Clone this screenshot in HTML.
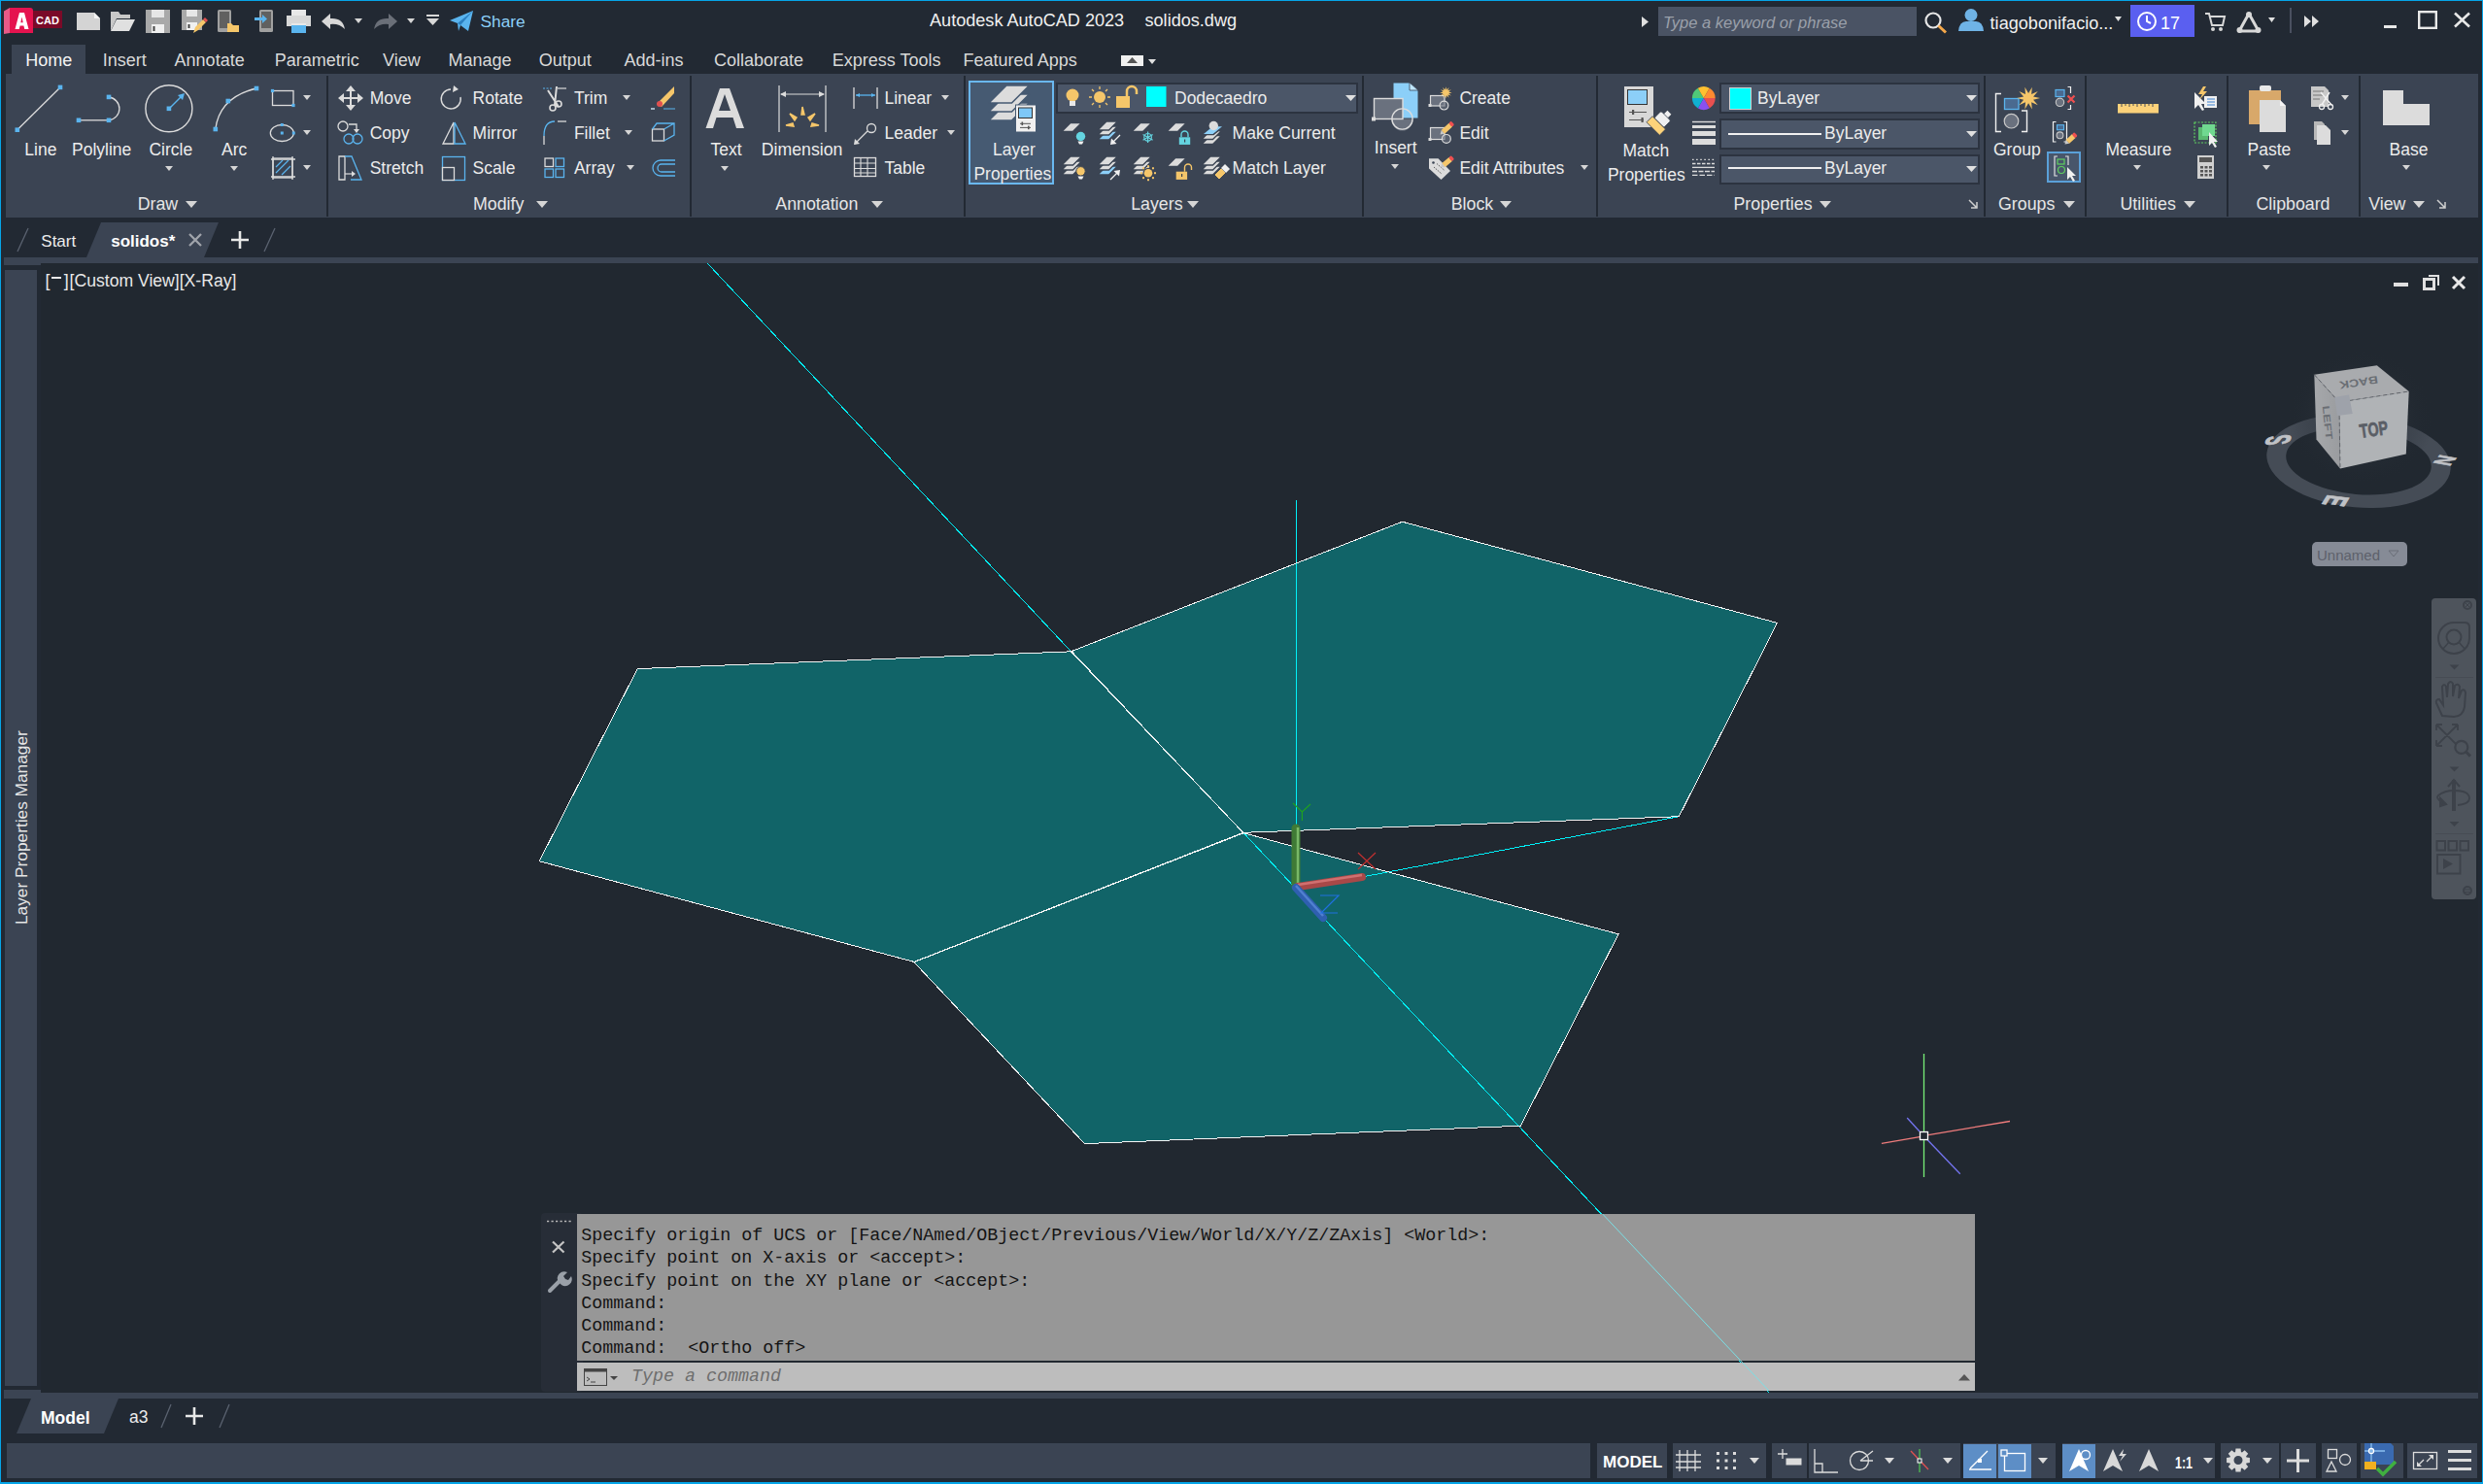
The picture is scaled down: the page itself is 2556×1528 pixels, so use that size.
<!DOCTYPE html><html><head><meta charset="utf-8"><style>
html,body{margin:0;padding:0;width:2556px;height:1528px;overflow:hidden;background:#222933;font-family:"Liberation Sans", sans-serif;}
div,svg{box-sizing:border-box}
</style></head><body>
<div style="position:absolute;left:0px;top:0px;width:2556px;height:1528px;background:#222933;"></div>
<div style="position:absolute;left:6px;top:76px;width:2545px;height:148px;background:#3b4453;"></div>
<div style="position:absolute;left:12px;top:46px;width:76px;height:30px;background:#3b4453;"></div>
<div style="position:absolute;left:4px;top:265px;width:2547px;height:6px;background:#3b4453;"></div>
<div style="position:absolute;left:4px;top:271px;width:38px;height:2px;background:#3b4453;"></div>
<div style="position:absolute;left:42px;top:271px;width:2509px;height:1163px;background:#212830;"></div>
<div style="position:absolute;left:5px;top:278px;width:33px;height:1149px;background:#3b4453;"></div>
<div style="position:absolute;left:4px;top:1431px;width:38px;height:3px;background:#3b4453;"></div>
<div style="position:absolute;left:4px;top:1434px;width:2547px;height:6px;background:#3b4453;"></div>
<div style="position:absolute;left:7px;top:1486px;width:1630px;height:36px;background:#3b4453;"></div>
<svg style="position:absolute;left:3px;top:7px;overflow:visible;" width="62" height="28" viewBox="0 0 62 28"><path d="M1,4.5 L7,1 L7,27 L1,28 Z" fill="#e85a87"/><path d="M7,1 L28,1 Q31,1 31,4 L31,27 L7,27 Z" fill="#e5134f"/><rect x="31" y="4" width="30" height="18" fill="#7a0a28"/><path d="M12.5,23 L17,6 L22,6 L26.5,23 L22.3,23 L21.4,19.5 L17.6,19.5 L16.7,23 Z M18.3,16.2 L20.7,16.2 L19.5,10.5 Z" fill="#fff"/><text x="46" y="17.5" font-family="Liberation Sans" font-weight="bold" font-size="11" fill="#fff" text-anchor="middle">CAD</text></svg>
<svg style="position:absolute;left:79px;top:13px;overflow:visible;" width="24" height="18" viewBox="0 0 24 18"><path d="M0,0 L18,0 L24,6 L24,18 L0,18 Z" fill="#d4d4d4"/><path d="M18,0 L18,6 L24,6 Z" fill="#f4f4f4"/></svg>
<svg style="position:absolute;left:114px;top:11px;overflow:visible;" width="25" height="21" viewBox="0 0 25 21"><path d="M0,1 L8,1 L10,4 L20,4 L20,8 L6,8 L0,21 Z" fill="#c8c8c8"/><path d="M6,9 L25,9 L19,21 L0,21 Z" fill="#e0e0e0"/></svg>
<svg style="position:absolute;left:150px;top:10px;overflow:visible;" width="25" height="24" viewBox="0 0 25 24"><path d="M0,0 L25,0 L25,24 L0,24 Z" fill="#a9a9a9"/><rect x="6" y="0" width="13" height="8" fill="#e6e6e6"/><rect x="6" y="15" width="13" height="9" fill="#f0f0f0"/><rect x="7.5" y="17" width="2" height="5" fill="#444"/></svg>
<svg style="position:absolute;left:187px;top:10px;overflow:visible;" width="25" height="24" viewBox="0 0 25 24"><path d="M0,0 L21,0 L21,21 L0,21 Z" fill="#a9a9a9"/><rect x="5" y="0" width="11" height="7" fill="#e6e6e6"/><rect x="5" y="13" width="11" height="8" fill="#f0f0f0"/><rect x="6.5" y="15" width="2" height="4" fill="#444"/><path d="M12,24 L14,18 L22,10 L25,13 L17,21 Z" fill="#f5c66a"/><path d="M22,10 L24,8 L27,11 L25,13Z" fill="#e05050"/></svg>
<svg style="position:absolute;left:224px;top:10px;overflow:visible;" width="23" height="24" viewBox="0 0 23 24"><rect x="0" y="0" width="14" height="23" rx="1.5" fill="#a0a0a0"/><rect x="2" y="2" width="10" height="17" fill="#606060"/><path d="M10,14 L14,14 L16,16 L22,16 L22,23 L10,23 Z" fill="#f5c66a"/></svg>
<svg style="position:absolute;left:262px;top:10px;overflow:visible;" width="19" height="24" viewBox="0 0 19 24"><rect x="5" y="0" width="14" height="23" rx="1.5" fill="#a0a0a0"/><rect x="7" y="2" width="10" height="17" fill="#606060"/><path d="M0,8 L8,8 L8,5 L13,9.5 L8,14 L8,11 L0,11 Z" fill="#5ab4ee"/></svg>
<svg style="position:absolute;left:295px;top:10px;overflow:visible;" width="25" height="24" viewBox="0 0 25 24"><rect x="5" y="0" width="15" height="6" fill="#e8e8e8"/><rect x="0" y="6" width="25" height="11" fill="#d8d8d8"/><rect x="5" y="14" width="15" height="10" fill="#5ab4ee"/><rect x="5" y="14" width="15" height="2" fill="#e8e8e8"/></svg>
<svg style="position:absolute;left:331px;top:14px;overflow:visible;" width="25" height="16" viewBox="0 0 25 16"><path d="M0,8 L9,0 L9,5 Q22,4 24,16 Q18,10 9,11 L9,16 Z" fill="#d8d8d8"/></svg>
<svg style="position:absolute;left:365.0px;top:19.0px;overflow:visible;" width="8" height="5" viewBox="0 0 8 5"><path d="M0,0 L8,0 L4.0,5 Z" fill="#d6d6d6"/></svg>
<svg style="position:absolute;left:385px;top:14px;overflow:visible;" width="24" height="16" viewBox="0 0 24 16"><path d="M24,8 L15,0 L15,5 Q2,4 0,16 Q6,10 15,11 L15,16 Z" fill="#6a6f78"/></svg>
<svg style="position:absolute;left:418.6px;top:19.0px;overflow:visible;" width="8" height="5" viewBox="0 0 8 5"><path d="M0,0 L8,0 L4.0,5 Z" fill="#d6d6d6"/></svg>
<svg style="position:absolute;left:439px;top:15px;overflow:visible;" width="13" height="11" viewBox="0 0 13 11"><rect x="0" y="0" width="13" height="2" fill="#d8d8d8"/><path d="M0,4 L13,4 L6.5,11 Z" fill="#d8d8d8"/></svg>
<svg style="position:absolute;left:463px;top:11px;overflow:visible;" width="24" height="21" viewBox="0 0 24 21"><path d="M0,10 L24,0 L19,21 L11,15 L9,21 L8,13 Z" fill="#5ab4ee"/><path d="M8,13 L24,0 L11,15 Z" fill="#2a7fc0"/></svg>
<div style="position:absolute;left:494.5px;top:14.36px;font-size:17.3px;line-height:17.3px;color:#8ccff8;font-family:'Liberation Sans', sans-serif;white-space:pre;">Share</div>
<div style="position:absolute;left:957px;top:11.68px;font-size:18.1px;line-height:18.1px;color:#f0f0f0;font-family:'Liberation Sans', sans-serif;white-space:pre;">Autodesk AutoCAD 2023</div>
<div style="position:absolute;left:1178.5px;top:11.68px;font-size:18.1px;line-height:18.1px;color:#f0f0f0;font-family:'Liberation Sans', sans-serif;white-space:pre;">solidos.dwg</div>
<svg style="position:absolute;left:1690px;top:17px;overflow:visible;" width="7" height="11" viewBox="0 0 7 11"><path d="M0,0 L7,5.5 L0,11 Z" fill="#e0e0e0"/></svg>
<div style="position:absolute;left:1707px;top:7px;width:266px;height:30px;background:#4a5364;"></div>
<div style="position:absolute;left:1712px;top:15.03px;font-size:16.5px;line-height:16.5px;color:#9aa0aa;font-family:'Liberation Sans', sans-serif;white-space:pre;font-style:italic;">Type a keyword or phrase</div>
<svg style="position:absolute;left:1981px;top:12px;overflow:visible;" width="24" height="22" viewBox="0 0 24 22"><circle cx="9" cy="9" r="7.5" fill="none" stroke="#e6e6e6" stroke-width="2.2"/><path d="M14.5,14.5 L22,21.5" stroke="#f5a84a" stroke-width="3"/></svg>
<svg style="position:absolute;left:2016px;top:9px;overflow:visible;" width="26" height="23" viewBox="0 0 26 23"><circle cx="13" cy="6.5" r="6.5" fill="#6fb3e6"/><path d="M0,23 Q1,13 8,13 L18,13 Q25,13 26,23 Z" fill="#6fb3e6"/></svg>
<div style="position:absolute;left:2048.6px;top:14.68px;font-size:18.1px;line-height:18.1px;color:#f0f0f0;font-family:'Liberation Sans', sans-serif;white-space:pre;">tiagobonifacio...</div>
<svg style="position:absolute;left:2177.0px;top:16.5px;overflow:visible;" width="7" height="5" viewBox="0 0 7 5"><path d="M0,0 L7,0 L3.5,5 Z" fill="#e0e0e0"/></svg>
<div style="position:absolute;left:2193px;top:5px;width:66px;height:33px;background:#5a5ff0;"></div>
<svg style="position:absolute;left:2199px;top:11px;overflow:visible;" width="22" height="22" viewBox="0 0 22 22"><circle cx="11" cy="11" r="9" fill="none" stroke="#fff" stroke-width="2"/><path d="M11,5 L11,11 L15,13" fill="none" stroke="#fff" stroke-width="2"/></svg>
<div style="position:absolute;left:2224px;top:14.76px;font-size:18px;line-height:18px;color:#ffffff;font-family:'Liberation Sans', sans-serif;white-space:pre;">17</div>
<svg style="position:absolute;left:2270px;top:13px;overflow:visible;" width="20" height="20" viewBox="0 0 20 20"><path d="M0,1 L4,1 L7,13 L18,13 L20,4 L5,4" fill="none" stroke="#d8d8d8" stroke-width="2"/><circle cx="8" cy="17" r="2" fill="#d8d8d8"/><circle cx="16" cy="17" r="2" fill="#d8d8d8"/></svg>
<svg style="position:absolute;left:2303px;top:12px;overflow:visible;" width="24" height="22" viewBox="0 0 24 22"><path d="M12,2 L22,20 L2,20 Z" fill="none" stroke="#d8d8d8" stroke-width="3" stroke-linejoin="round"/><circle cx="12" cy="3" r="3" fill="#d8d8d8"/><circle cx="2.5" cy="19" r="3" fill="#d8d8d8"/><circle cx="21.5" cy="19" r="3" fill="#d8d8d8"/></svg>
<svg style="position:absolute;left:2334.5px;top:17.5px;overflow:visible;" width="7" height="5" viewBox="0 0 7 5"><path d="M0,0 L7,0 L3.5,5 Z" fill="#e0e0e0"/></svg>
<div style="position:absolute;left:2357px;top:8px;width:2px;height:26px;background:#4a5060;"></div>
<svg style="position:absolute;left:2372px;top:16px;overflow:visible;" width="15" height="12" viewBox="0 0 15 12"><path d="M0,0 L7,6 L0,12 Z M8,0 L15,6 L8,12 Z" fill="#e0e0e0"/></svg>
<div style="position:absolute;left:2454px;top:26px;width:13px;height:3px;background:#e8e8e8;"></div>
<svg style="position:absolute;left:2489px;top:11px;overflow:visible;" width="20" height="19" viewBox="0 0 20 19"><rect x="1.2" y="1.2" width="17.6" height="16.6" fill="none" stroke="#e8e8e8" stroke-width="2.4"/></svg>
<svg style="position:absolute;left:2526px;top:13px;overflow:visible;" width="17" height="15" viewBox="0 0 17 15"><path d="M1,0.5 L16,14.5 M16,0.5 L1,14.5" stroke="#e8e8e8" stroke-width="2.6"/></svg>
<div style="position:absolute;left:26.2px;top:52.96px;font-size:18px;line-height:18px;color:#f4f4f4;font-family:'Liberation Sans', sans-serif;white-space:pre;">Home</div>
<div style="position:absolute;left:105.7px;top:52.96px;font-size:18px;line-height:18px;color:#d9d9d9;font-family:'Liberation Sans', sans-serif;white-space:pre;">Insert</div>
<div style="position:absolute;left:179.6px;top:52.96px;font-size:18px;line-height:18px;color:#d9d9d9;font-family:'Liberation Sans', sans-serif;white-space:pre;">Annotate</div>
<div style="position:absolute;left:282.8px;top:52.96px;font-size:18px;line-height:18px;color:#d9d9d9;font-family:'Liberation Sans', sans-serif;white-space:pre;">Parametric</div>
<div style="position:absolute;left:394.1px;top:52.96px;font-size:18px;line-height:18px;color:#d9d9d9;font-family:'Liberation Sans', sans-serif;white-space:pre;">View</div>
<div style="position:absolute;left:461.5px;top:52.96px;font-size:18px;line-height:18px;color:#d9d9d9;font-family:'Liberation Sans', sans-serif;white-space:pre;">Manage</div>
<div style="position:absolute;left:554.8px;top:52.96px;font-size:18px;line-height:18px;color:#d9d9d9;font-family:'Liberation Sans', sans-serif;white-space:pre;">Output</div>
<div style="position:absolute;left:642.5px;top:52.96px;font-size:18px;line-height:18px;color:#d9d9d9;font-family:'Liberation Sans', sans-serif;white-space:pre;">Add-ins</div>
<div style="position:absolute;left:735px;top:52.96px;font-size:18px;line-height:18px;color:#d9d9d9;font-family:'Liberation Sans', sans-serif;white-space:pre;">Collaborate</div>
<div style="position:absolute;left:856.8px;top:52.96px;font-size:18px;line-height:18px;color:#d9d9d9;font-family:'Liberation Sans', sans-serif;white-space:pre;">Express Tools</div>
<div style="position:absolute;left:991.6px;top:52.96px;font-size:18px;line-height:18px;color:#d9d9d9;font-family:'Liberation Sans', sans-serif;white-space:pre;">Featured Apps</div>
<div style="position:absolute;left:1154px;top:57px;width:23px;height:11px;background:#f0f0f0;"></div>
<svg style="position:absolute;left:1160px;top:59px;overflow:visible;" width="11" height="6" viewBox="0 0 11 6"><path d="M0,6 L5.5,0 L11,6 Z" fill="#555"/></svg>
<svg style="position:absolute;left:1182.0px;top:61.0px;overflow:visible;" width="8" height="5" viewBox="0 0 8 5"><path d="M0,0 L8,0 L4.0,5 Z" fill="#e0e0e0"/></svg>
<div style="position:absolute;left:335.5px;top:78px;width:2.0px;height:145px;background:#222933;"></div>
<div style="position:absolute;left:710px;top:78px;width:2px;height:145px;background:#222933;"></div>
<div style="position:absolute;left:992px;top:78px;width:2px;height:145px;background:#222933;"></div>
<div style="position:absolute;left:1401.6px;top:78px;width:2.0px;height:145px;background:#222933;"></div>
<div style="position:absolute;left:1643.4px;top:78px;width:2.0px;height:145px;background:#222933;"></div>
<div style="position:absolute;left:2041.7px;top:78px;width:2.0px;height:145px;background:#222933;"></div>
<div style="position:absolute;left:2146.1px;top:78px;width:2.0px;height:145px;background:#222933;"></div>
<div style="position:absolute;left:2291.9px;top:78px;width:2.0px;height:145px;background:#222933;"></div>
<div style="position:absolute;left:2427.8px;top:78px;width:2.0px;height:145px;background:#222933;"></div>
<div style="position:absolute;left:141.7px;top:202.43px;font-size:17.8px;line-height:17.8px;color:#e6e6e6;font-family:'Liberation Sans', sans-serif;white-space:pre;">Draw</div>
<svg style="position:absolute;left:191.0px;top:206.5px;overflow:visible;" width="12" height="7" viewBox="0 0 12 7"><path d="M0,0 L12,0 L6.0,7 Z" fill="#d6d6d6"/></svg>
<div style="position:absolute;left:487px;top:202.43px;font-size:17.8px;line-height:17.8px;color:#e6e6e6;font-family:'Liberation Sans', sans-serif;white-space:pre;">Modify</div>
<svg style="position:absolute;left:552.0px;top:206.5px;overflow:visible;" width="12" height="7" viewBox="0 0 12 7"><path d="M0,0 L12,0 L6.0,7 Z" fill="#d6d6d6"/></svg>
<div style="position:absolute;left:798.3px;top:202.43px;font-size:17.8px;line-height:17.8px;color:#e6e6e6;font-family:'Liberation Sans', sans-serif;white-space:pre;">Annotation</div>
<svg style="position:absolute;left:897.0px;top:206.5px;overflow:visible;" width="12" height="7" viewBox="0 0 12 7"><path d="M0,0 L12,0 L6.0,7 Z" fill="#d6d6d6"/></svg>
<div style="position:absolute;left:1164.2px;top:202.43px;font-size:17.8px;line-height:17.8px;color:#e6e6e6;font-family:'Liberation Sans', sans-serif;white-space:pre;">Layers</div>
<svg style="position:absolute;left:1222.0px;top:206.5px;overflow:visible;" width="12" height="7" viewBox="0 0 12 7"><path d="M0,0 L12,0 L6.0,7 Z" fill="#d6d6d6"/></svg>
<div style="position:absolute;left:1493.7px;top:202.43px;font-size:17.8px;line-height:17.8px;color:#e6e6e6;font-family:'Liberation Sans', sans-serif;white-space:pre;">Block</div>
<svg style="position:absolute;left:1544.4px;top:206.5px;overflow:visible;" width="12" height="7" viewBox="0 0 12 7"><path d="M0,0 L12,0 L6.0,7 Z" fill="#d6d6d6"/></svg>
<div style="position:absolute;left:1784.5px;top:202.43px;font-size:17.8px;line-height:17.8px;color:#e6e6e6;font-family:'Liberation Sans', sans-serif;white-space:pre;">Properties</div>
<svg style="position:absolute;left:1873.0px;top:206.5px;overflow:visible;" width="12" height="7" viewBox="0 0 12 7"><path d="M0,0 L12,0 L6.0,7 Z" fill="#d6d6d6"/></svg>
<div style="position:absolute;left:2057px;top:202.43px;font-size:17.8px;line-height:17.8px;color:#e6e6e6;font-family:'Liberation Sans', sans-serif;white-space:pre;">Groups</div>
<svg style="position:absolute;left:2124.3px;top:206.5px;overflow:visible;" width="12" height="7" viewBox="0 0 12 7"><path d="M0,0 L12,0 L6.0,7 Z" fill="#d6d6d6"/></svg>
<div style="position:absolute;left:2182.5px;top:202.43px;font-size:17.8px;line-height:17.8px;color:#e6e6e6;font-family:'Liberation Sans', sans-serif;white-space:pre;">Utilities</div>
<svg style="position:absolute;left:2248.0px;top:206.5px;overflow:visible;" width="12" height="7" viewBox="0 0 12 7"><path d="M0,0 L12,0 L6.0,7 Z" fill="#d6d6d6"/></svg>
<div style="position:absolute;left:2322.4px;top:202.43px;font-size:17.8px;line-height:17.8px;color:#e6e6e6;font-family:'Liberation Sans', sans-serif;white-space:pre;">Clipboard</div>
<div style="position:absolute;left:2438.2px;top:202.43px;font-size:17.8px;line-height:17.8px;color:#e6e6e6;font-family:'Liberation Sans', sans-serif;white-space:pre;">View</div>
<svg style="position:absolute;left:2483.7px;top:206.5px;overflow:visible;" width="12" height="7" viewBox="0 0 12 7"><path d="M0,0 L12,0 L6.0,7 Z" fill="#d6d6d6"/></svg>
<svg style="position:absolute;left:2026px;top:205px;overflow:visible;" width="10" height="10" viewBox="0 0 10 10"><path d="M1,1 L9,9 M9,3 L9,9 L3,9" fill="none" stroke="#d0d0d0" stroke-width="1.5"/></svg>
<svg style="position:absolute;left:2507.8px;top:205px;overflow:visible;" width="10" height="10" viewBox="0 0 10 10"><path d="M1,1 L9,9 M9,3 L9,9 L3,9" fill="none" stroke="#d0d0d0" stroke-width="1.5"/></svg>
<svg style="position:absolute;left:0px;top:0px;overflow:visible;" width="340" height="224" viewBox="0 0 340 224"><line x1="18.5" y1="133" x2="61.5" y2="90.5" stroke="#dcdcdc" stroke-width="1.3"/><rect x="15.5" y="131.39999999999998" width="4.6" height="4.6" fill="#5ab4ee"/><rect x="59.7" y="87.60000000000001" width="4.6" height="4.6" fill="#5ab4ee"/><line x1="81" y1="123.8" x2="112" y2="123.8" stroke="#dcdcdc" stroke-width="1.3"/><path d="M112,100 A12.5,12 0 0 1 112,123.8" fill="none" stroke="#dcdcdc" stroke-width="1.3"/><rect x="78.7" y="121.5" width="4.6" height="4.6" fill="#5ab4ee"/><rect x="109.7" y="121.5" width="4.6" height="4.6" fill="#5ab4ee"/><rect x="109.7" y="97.60000000000001" width="4.6" height="4.6" fill="#5ab4ee"/><circle cx="173.9" cy="111.8" r="24" fill="none" stroke="#dcdcdc" stroke-width="1.4"/><line x1="174" y1="112" x2="187" y2="99" stroke="#5ab4ee" stroke-width="1.5"/><path d="M190,96 L183,98 L188,103 Z" fill="#5ab4ee"/><rect x="171.6" y="109.5" width="4.6" height="4.6" fill="#5ab4ee"/><path d="M221.8,133 Q226,100 264,91" fill="none" stroke="#dcdcdc" stroke-width="1.3"/><rect x="219.5" y="130.7" width="4.6" height="4.6" fill="#5ab4ee"/><rect x="232.5" y="101.7" width="4.6" height="4.6" fill="#5ab4ee"/><rect x="261.7" y="88.7" width="4.6" height="4.6" fill="#5ab4ee"/><rect x="280.5" y="93.5" width="21.5" height="15" fill="none" stroke="#dcdcdc" stroke-width="1.3"/><rect x="278.9" y="91.9" width="3.2" height="3.2" fill="#5ab4ee"/><rect x="300.4" y="106.9" width="3.2" height="3.2" fill="#5ab4ee"/><ellipse cx="290.3" cy="137" rx="12" ry="8.5" fill="none" stroke="#dcdcdc" stroke-width="1.3"/><rect x="288.8" y="135.5" width="3" height="3" fill="#5ab4ee"/><rect x="288.8" y="127.0" width="3" height="3" fill="#5ab4ee"/><rect x="300.8" y="135.5" width="3" height="3" fill="#5ab4ee"/><rect x="281" y="163" width="20" height="20" fill="none" stroke="#dcdcdc" stroke-width="1.3"/><path d="M279,164 L304,164 M279,182 L304,182 M281,161 L281,185 M301,161 L301,185" stroke="#dcdcdc" stroke-width="1.3"/><path d="M284,178 L297,165 M284,172 L291,165 M290,180 L299,171" stroke="#5ab4ee" stroke-width="1.2"/></svg>
<div style="position:absolute;left:25.3px;top:145.79px;font-size:17.5px;line-height:17.5px;color:#ececec;font-family:'Liberation Sans', sans-serif;white-space:pre;">Line</div>
<div style="position:absolute;left:74px;top:145.79px;font-size:17.5px;line-height:17.5px;color:#ececec;font-family:'Liberation Sans', sans-serif;white-space:pre;">Polyline</div>
<div style="position:absolute;left:153.4px;top:145.79px;font-size:17.5px;line-height:17.5px;color:#ececec;font-family:'Liberation Sans', sans-serif;white-space:pre;">Circle</div>
<div style="position:absolute;left:228px;top:145.79px;font-size:17.5px;line-height:17.5px;color:#ececec;font-family:'Liberation Sans', sans-serif;white-space:pre;">Arc</div>
<svg style="position:absolute;left:169.9px;top:170.5px;overflow:visible;" width="8" height="5" viewBox="0 0 8 5"><path d="M0,0 L8,0 L4.0,5 Z" fill="#d6d6d6"/></svg>
<svg style="position:absolute;left:236.8px;top:170.5px;overflow:visible;" width="8" height="5" viewBox="0 0 8 5"><path d="M0,0 L8,0 L4.0,5 Z" fill="#d6d6d6"/></svg>
<svg style="position:absolute;left:312.3px;top:97.5px;overflow:visible;" width="8" height="5" viewBox="0 0 8 5"><path d="M0,0 L8,0 L4.0,5 Z" fill="#d6d6d6"/></svg>
<svg style="position:absolute;left:312.3px;top:133.5px;overflow:visible;" width="8" height="5" viewBox="0 0 8 5"><path d="M0,0 L8,0 L4.0,5 Z" fill="#d6d6d6"/></svg>
<svg style="position:absolute;left:312.3px;top:169.5px;overflow:visible;" width="8" height="5" viewBox="0 0 8 5"><path d="M0,0 L8,0 L4.0,5 Z" fill="#d6d6d6"/></svg>
<svg style="position:absolute;left:0px;top:0px;overflow:visible;" width="720" height="224" viewBox="0 0 720 224"><path d="M361,89 L361,113 M349,101 L373,101" stroke="#dcdcdc" stroke-width="2"/><path d="M361,88 L356,94 L366,94Z M361,114 L356,108 L366,108Z M348,101 L354,96 L354,106Z M374,101 L368,96 L368,106Z" fill="#dcdcdc"/><circle cx="353" cy="130" r="5" fill="none" stroke="#dcdcdc" stroke-width="1.3"/><path d="M359,128 L367,128 L367,134" fill="none" stroke="#dcdcdc" stroke-width="1.3"/><path d="M364,133 L370,133 L367,137Z" fill="#dcdcdc"/><circle cx="359" cy="143" r="5" fill="none" stroke="#5ab4ee" stroke-width="1.3"/><circle cx="368" cy="143" r="5" fill="none" stroke="#5ab4ee" stroke-width="1.3"/><path d="M349,161 L355,161 L355,185 L349,185 Z" fill="none" stroke="#dcdcdc" stroke-width="1.3"/><path d="M355,161 L362,161 L372,185 L361,185" fill="none" stroke="#5ab4ee" stroke-width="1.3"/><path d="M355,179 L364,179" stroke="#dcdcdc" stroke-width="1.2"/><path d="M366,179 L362,176 L362,182Z" fill="#dcdcdc"/><path d="M464,92 A10,10 0 1 0 474,100" fill="none" stroke="#dcdcdc" stroke-width="1.4"/><path d="M467,88 L472,92 L466,95Z" fill="#dcdcdc"/><path d="M467,126 L456,148 L467,148 Z" fill="none" stroke="#dcdcdc" stroke-width="1.3"/><path d="M468,126 L479,148 L468,148 Z" fill="none" stroke="#5ab4ee" stroke-width="1.3"/><rect x="455.5" y="161.5" width="23" height="24" fill="none" stroke="#5ab4ee" stroke-width="1.3"/><rect x="455.5" y="172.5" width="12" height="13" fill="#3b4453" stroke="#dcdcdc" stroke-width="1.3"/><path d="M559,91 L569,91" stroke="#5ab4ee" stroke-width="1.2" stroke-dasharray="2,1.5"/><path d="M574,91 L583,91" stroke="#dcdcdc" stroke-width="1.2"/><path d="M564,93 L575,110 M573,89 L571,108" stroke="#dcdcdc" stroke-width="2"/><circle cx="569" cy="111" r="3" fill="none" stroke="#dcdcdc" stroke-width="1.6"/><circle cx="575" cy="107" r="3" fill="none" stroke="#dcdcdc" stroke-width="1.6"/><path d="M560,149 L560,140" stroke="#dcdcdc" stroke-width="1.3"/><path d="M560,140 Q560,125 571,125" fill="none" stroke="#5ab4ee" stroke-width="1.3"/><path d="M574,125 L583,125" stroke="#dcdcdc" stroke-width="1.3"/><rect x="561" y="163" width="8.5" height="8.5" fill="none" stroke="#dcdcdc" stroke-width="1.3"/><rect x="572" y="163" width="8.5" height="8.5" fill="none" stroke="#5ab4ee" stroke-width="1.3"/><rect x="561" y="174" width="8.5" height="8.5" fill="none" stroke="#5ab4ee" stroke-width="1.3"/><rect x="572" y="174" width="8.5" height="8.5" fill="none" stroke="#5ab4ee" stroke-width="1.3"/><path d="M676,107 L694,89 L694,96 L681,110 Z" fill="#f5c66a"/><circle cx="679" cy="107" r="3" fill="#e05050"/><path d="M670,112 L674,112 M683,112 L695,112" stroke="#5ab4ee" stroke-width="1.2"/><path d="M670,112 L674,112" stroke="#dcdcdc" stroke-width="1.2"/><rect x="671.5" y="133" width="12" height="12" fill="none" stroke="#dcdcdc" stroke-width="1.3"/><path d="M671.5,133 L676,127 L694,127 L694,139 L683.5,145 M683.5,133 L694,127" fill="none" stroke="#5ab4ee" stroke-width="1.3"/><path d="M695,165 L680,165 A8,8 0 0 0 680,181 L695,181 M695,169 L681,169 A4,4 0 0 0 681,177 L695,177" fill="none" stroke="#5ab4ee" stroke-width="1.3"/></svg>
<div style="position:absolute;left:380.7px;top:92.89px;font-size:17.5px;line-height:17.5px;color:#ececec;font-family:'Liberation Sans', sans-serif;white-space:pre;">Move</div>
<div style="position:absolute;left:380.7px;top:129.19px;font-size:17.5px;line-height:17.5px;color:#ececec;font-family:'Liberation Sans', sans-serif;white-space:pre;">Copy</div>
<div style="position:absolute;left:380.7px;top:165.19px;font-size:17.5px;line-height:17.5px;color:#ececec;font-family:'Liberation Sans', sans-serif;white-space:pre;">Stretch</div>
<div style="position:absolute;left:486.6px;top:92.89px;font-size:17.5px;line-height:17.5px;color:#ececec;font-family:'Liberation Sans', sans-serif;white-space:pre;">Rotate</div>
<div style="position:absolute;left:486.6px;top:129.19px;font-size:17.5px;line-height:17.5px;color:#ececec;font-family:'Liberation Sans', sans-serif;white-space:pre;">Mirror</div>
<div style="position:absolute;left:486.6px;top:165.19px;font-size:17.5px;line-height:17.5px;color:#ececec;font-family:'Liberation Sans', sans-serif;white-space:pre;">Scale</div>
<div style="position:absolute;left:590.9px;top:92.89px;font-size:17.5px;line-height:17.5px;color:#ececec;font-family:'Liberation Sans', sans-serif;white-space:pre;">Trim</div>
<div style="position:absolute;left:590.9px;top:129.19px;font-size:17.5px;line-height:17.5px;color:#ececec;font-family:'Liberation Sans', sans-serif;white-space:pre;">Fillet</div>
<div style="position:absolute;left:590.9px;top:165.19px;font-size:17.5px;line-height:17.5px;color:#ececec;font-family:'Liberation Sans', sans-serif;white-space:pre;">Array</div>
<svg style="position:absolute;left:640.8px;top:97.5px;overflow:visible;" width="8" height="5" viewBox="0 0 8 5"><path d="M0,0 L8,0 L4.0,5 Z" fill="#d6d6d6"/></svg>
<svg style="position:absolute;left:643.0px;top:133.5px;overflow:visible;" width="8" height="5" viewBox="0 0 8 5"><path d="M0,0 L8,0 L4.0,5 Z" fill="#d6d6d6"/></svg>
<svg style="position:absolute;left:645.0px;top:169.5px;overflow:visible;" width="8" height="5" viewBox="0 0 8 5"><path d="M0,0 L8,0 L4.0,5 Z" fill="#d6d6d6"/></svg>
<svg style="position:absolute;left:0px;top:0px;overflow:visible;" width="1000" height="224" viewBox="0 0 1000 224"><path d="M726.5,132 L741,91 L751,91 L766,132 L758,132 L754.5,121 L737.5,121 L734,132 Z M740,114 L752,114 L746,97 Z" fill="#dcdcdc"/><path d="M802,88 L802,136 M850,88 L850,136" stroke="#dcdcdc" stroke-width="1.2"/><path d="M804,97 L848,97" stroke="#dcdcdc" stroke-width="1.2"/><path d="M803,97 L809,94 L809,100Z M849,97 L843,94 L843,100Z" fill="#dcdcdc"/><path d="M826,110 L825,118 L828,118Z M813,117 L818,124 L820,121Z M839,117 L834,124 L832,121Z M809,129 L817,130 L816,127Z M843,129 L835,130 L836,127Z" fill="#f5c66a" stroke="#f5c66a" stroke-width="1.5"/><path d="M879,90 L879,112 M903,90 L903,112" stroke="#dcdcdc" stroke-width="1.3"/><path d="M881,98 L901,98" stroke="#5ab4ee" stroke-width="1.3"/><path d="M881,98 L885,96 L885,100Z M901,98 L897,96 L897,100Z" fill="#5ab4ee"/><path d="M880,148 L893,135" stroke="#dcdcdc" stroke-width="1.3"/><path d="M879,149 L880,143 L885,148Z" fill="#dcdcdc"/><circle cx="897" cy="132" r="4.5" fill="none" stroke="#dcdcdc" stroke-width="1.3"/><rect x="879.5" y="162.5" width="22" height="19" fill="none" stroke="#dcdcdc" stroke-width="1.3"/><path d="M879.5,168 L901.5,168 M879.5,173.5 L901.5,173.5 M879.5,178 L901.5,178 M886,163 L886,181 M893,163 L893,181" stroke="#dcdcdc" stroke-width="1.1"/></svg>
<div style="position:absolute;left:731.6px;top:145.99px;font-size:17.5px;line-height:17.5px;color:#ececec;font-family:'Liberation Sans', sans-serif;white-space:pre;">Text</div>
<svg style="position:absolute;left:741.5px;top:170.5px;overflow:visible;" width="8" height="5" viewBox="0 0 8 5"><path d="M0,0 L8,0 L4.0,5 Z" fill="#d6d6d6"/></svg>
<div style="position:absolute;left:783.8px;top:145.82px;font-size:17.7px;line-height:17.7px;color:#ececec;font-family:'Liberation Sans', sans-serif;white-space:pre;">Dimension</div>
<div style="position:absolute;left:910.5px;top:92.89px;font-size:17.5px;line-height:17.5px;color:#ececec;font-family:'Liberation Sans', sans-serif;white-space:pre;">Linear</div>
<div style="position:absolute;left:910.5px;top:129.19px;font-size:17.5px;line-height:17.5px;color:#ececec;font-family:'Liberation Sans', sans-serif;white-space:pre;">Leader</div>
<div style="position:absolute;left:910.5px;top:165.19px;font-size:17.5px;line-height:17.5px;color:#ececec;font-family:'Liberation Sans', sans-serif;white-space:pre;">Table</div>
<svg style="position:absolute;left:968.8px;top:97.5px;overflow:visible;" width="8" height="5" viewBox="0 0 8 5"><path d="M0,0 L8,0 L4.0,5 Z" fill="#d6d6d6"/></svg>
<svg style="position:absolute;left:974.6px;top:133.5px;overflow:visible;" width="8" height="5" viewBox="0 0 8 5"><path d="M0,0 L8,0 L4.0,5 Z" fill="#d6d6d6"/></svg>
<div style="position:absolute;left:997px;top:83px;width:88px;height:107px;background:#465a72;border:2px solid #6ab8f0;"></div>
<svg style="position:absolute;left:0px;top:0px;overflow:visible;" width="1100" height="224" viewBox="0 0 1100 224"><path d="M1018,124 L1036,106 L1059.5,106 L1041.5,124 Z" fill="#dcdcdc" stroke="#465a72" stroke-width="1.6" stroke-linejoin="round"/><path d="M1018,115 L1036,97 L1059.5,97 L1041.5,115 Z" fill="#dcdcdc" stroke="#465a72" stroke-width="1.6" stroke-linejoin="round"/><path d="M1018,106 L1036,88 L1059.5,88 L1041.5,106 Z" fill="#dcdcdc" stroke="#465a72" stroke-width="1.6" stroke-linejoin="round"/><rect x="1045.5" y="108" width="21" height="28" fill="#f0f0f0" stroke="#465a72" stroke-width="1"/><rect x="1048.5" y="111" width="14" height="10.5" fill="#7ec8f8" stroke="#333" stroke-width="1"/><path d="M1050,127.3 L1061,127.3 M1050,131.4 L1061,131.4" stroke="#555" stroke-width="1"/><rect x="1051.5" y="125.5" width="1.6" height="3.6" fill="#555"/><rect x="1058" y="129.6" width="1.6" height="3.6" fill="#555"/></svg>
<div style="position:absolute;left:1022px;top:145.99px;font-size:17.5px;line-height:17.5px;color:#ececec;font-family:'Liberation Sans', sans-serif;white-space:pre;">Layer</div>
<div style="position:absolute;left:1002.4px;top:170.59px;font-size:17.5px;line-height:17.5px;color:#ececec;font-family:'Liberation Sans', sans-serif;white-space:pre;">Properties</div>
<div style="position:absolute;left:1087px;top:85px;width:311px;height:32px;background:#4b5668;border:2px solid #2c3340;"></div>
<svg style="position:absolute;left:0px;top:0px;overflow:visible;" width="1400" height="224" viewBox="0 0 1400 224"><circle cx="1104" cy="98" r="6.5" fill="#f5c66a"/><rect x="1101" y="104" width="6" height="5" fill="#e8e8e8"/><circle cx="1132" cy="100" r="6" fill="#f5c66a"/><path d="M1132,89 L1132,92 M1132,108 L1132,111 M1121,100 L1124,100 M1140,100 L1143,100 M1124,92 L1126,94 M1138,106 L1140,108 M1140,92 L1138,94 M1124,108 L1126,106" stroke="#f5c66a" stroke-width="1.3"/><rect x="1149" y="99" width="14" height="12" fill="#f5c66a"/><path d="M1160,99 L1160,94 A5,5 0 0 1 1170,94 L1170,97" fill="none" stroke="#f5c66a" stroke-width="2.5"/><rect x="1180" y="89" width="20.5" height="21" fill="#00ffff"/></svg>
<div style="position:absolute;left:1209px;top:92.69px;font-size:17.5px;line-height:17.5px;color:#ececec;font-family:'Liberation Sans', sans-serif;white-space:pre;">Dodecaedro</div>
<svg style="position:absolute;left:1384.5px;top:98.0px;overflow:visible;" width="11" height="6" viewBox="0 0 11 6"><path d="M0,0 L11,0 L5.5,6 Z" fill="#e0e0e0"/></svg>
<svg style="position:absolute;left:0px;top:0px;overflow:visible;" width="1400" height="224" viewBox="0 0 1400 224"><path d="M1092.9,135.5 L1101.9,126.5 L1113.4,126.5 L1104.4,135.5 Z" fill="#dcdcdc" stroke="#3b4453" stroke-width="1.4" stroke-linejoin="round"/><circle cx="1112.5" cy="140.5" r="4.7" fill="#64d4e0"/><path d="M1109.5,145.5 L1115.5,145.5 L1114,148.5 L1111,148.5Z" fill="#f0f0f0"/><path d="M1130,144 L1139,135 L1150.5,135 L1141.5,144 Z" fill="#8ccff8" stroke="#3b4453" stroke-width="1.4" stroke-linejoin="round"/><path d="M1130,139 L1139,130 L1150.5,130 L1141.5,139 Z" fill="#dcdcdc" stroke="#3b4453" stroke-width="1.4" stroke-linejoin="round"/><path d="M1130,134 L1139,125 L1150.5,125 L1141.5,134 Z" fill="#dcdcdc" stroke="#3b4453" stroke-width="1.4" stroke-linejoin="round"/><path d="M1153,139 L1145,147" stroke="#f0f0f0" stroke-width="1.3"/><path d="M1143,149 L1144,142.5 L1149.5,148Z" fill="#f0f0f0"/><path d="M1165,135.5 L1174,126.5 L1185.5,126.5 L1176.5,135.5 Z" fill="#dcdcdc" stroke="#3b4453" stroke-width="1.4" stroke-linejoin="round"/><g stroke="#64d4e0" stroke-width="1.2" fill="none"><circle cx="1181.6" cy="141.3" r="3.8"/><path d="M1181.6,135.5 V147 M1176.6,138.4 L1186.6,144.2 M1176.6,144.2 L1186.6,138.4"/></g><path d="M1200.9,135.5 L1209.9,126.5 L1221.4,126.5 L1212.4,135.5 Z" fill="#dcdcdc" stroke="#3b4453" stroke-width="1.4" stroke-linejoin="round"/><rect x="1213.8" y="141.3" width="11.4" height="7.6" fill="#64d4e0"/><path d="M1216,141.3 V138.5 A3.5,3.5 0 0 1 1223,138.5 V141.3" fill="none" stroke="#64d4e0" stroke-width="1.4"/><rect x="1219" y="143.5" width="1.2" height="3" fill="#3b4453"/><path d="M1237,148.5 L1246,139.5 L1257.5,139.5 L1248.5,148.5 Z" fill="#dcdcdc" stroke="#3b4453" stroke-width="1.4" stroke-linejoin="round"/><path d="M1237,143.5 L1246,134.5 L1257.5,134.5 L1248.5,143.5 Z" fill="#dcdcdc" stroke="#3b4453" stroke-width="1.4" stroke-linejoin="round"/><path d="M1237,138.6 L1248,129.6 L1260,129.6 L1249,138.6 Z" fill="#8ccff8" stroke="#3b4453" stroke-width="1.4" stroke-linejoin="round"/><circle cx="1249.3" cy="129.5" r="4.7" fill="#dcdcdc"/><path d="M1093,180 L1102,171 L1113.5,171 L1104.5,180 Z" fill="#dcdcdc" stroke="#3b4453" stroke-width="1.4" stroke-linejoin="round"/><path d="M1093,175 L1102,166 L1113.5,166 L1104.5,175 Z" fill="#dcdcdc" stroke="#3b4453" stroke-width="1.4" stroke-linejoin="round"/><path d="M1093,170 L1102,161 L1113.5,161 L1104.5,170 Z" fill="#dcdcdc" stroke="#3b4453" stroke-width="1.4" stroke-linejoin="round"/><circle cx="1112.5" cy="176.3" r="4.7" fill="#f5c66a" stroke="#3b4453" stroke-width="1"/><path d="M1109.5,181.5 L1115.5,181.5 L1114,184.5 L1111,184.5Z" fill="#f0f0f0"/><path d="M1130,180 L1139,171 L1150.5,171 L1141.5,180 Z" fill="#8ccff8" stroke="#3b4453" stroke-width="1.4" stroke-linejoin="round"/><path d="M1130,175 L1139,166 L1150.5,166 L1141.5,175 Z" fill="#dcdcdc" stroke="#3b4453" stroke-width="1.4" stroke-linejoin="round"/><path d="M1130,170 L1139,161 L1150.5,161 L1141.5,170 Z" fill="#dcdcdc" stroke="#3b4453" stroke-width="1.4" stroke-linejoin="round"/><path d="M1143,185 L1151,177" stroke="#f0f0f0" stroke-width="1.3"/><path d="M1153,175 L1152,181.5 L1146.5,176Z" fill="#f0f0f0"/><path d="M1165,180 L1174,171 L1185.5,171 L1176.5,180 Z" fill="#dcdcdc" stroke="#3b4453" stroke-width="1.4" stroke-linejoin="round"/><path d="M1165,175 L1174,166 L1185.5,166 L1176.5,175 Z" fill="#dcdcdc" stroke="#3b4453" stroke-width="1.4" stroke-linejoin="round"/><path d="M1165,170 L1174,161 L1185.5,161 L1176.5,170 Z" fill="#dcdcdc" stroke="#3b4453" stroke-width="1.4" stroke-linejoin="round"/><circle cx="1182" cy="178.2" r="5.5" fill="#3b4453"/><circle cx="1182" cy="178.2" r="4.3" fill="#f5c66a"/><rect x="1188.0" y="177.2" width="2" height="2" fill="#f5c66a"/><rect x="1185.9497383775786" y="182.1497565590163" width="2" height="2" fill="#f5c66a"/><rect x="1180.9999742875643" y="184.19999999995275" width="2" height="2" fill="#f5c66a"/><rect x="1176.0502252596127" y="182.14972019607418" width="2" height="2" fill="#f5c66a"/><rect x="1174.000000000189" y="177.19994857512853" width="2" height="2" fill="#f5c66a"/><rect x="1176.050297985497" y="172.2502070783087" width="2" height="2" fill="#f5c66a"/><rect x="1181.0000771373072" y="170.200000000425" width="2" height="2" fill="#f5c66a"/><rect x="1185.9498111029286" y="172.25031616713503" width="2" height="2" fill="#f5c66a"/><path d="M1200.9,171.5 L1209.9,162.5 L1221.4,162.5 L1212.4,171.5 Z" fill="#dcdcdc" stroke="#3b4453" stroke-width="1.4" stroke-linejoin="round"/><rect x="1210.7" y="176.7" width="11.4" height="8.2" fill="#f5c66a"/><path d="M1219.5,176.7 V172.5 A3.5,3.5 0 0 1 1226.5,172.5 V175" fill="none" stroke="#f5c66a" stroke-width="1.4"/><rect x="1216" y="179" width="1.2" height="3" fill="#3b4453"/><path d="M1237,180 L1246,171 L1257.5,171 L1248.5,180 Z" fill="#dcdcdc" stroke="#3b4453" stroke-width="1.4" stroke-linejoin="round"/><path d="M1237,175 L1246,166 L1257.5,166 L1248.5,175 Z" fill="#dcdcdc" stroke="#3b4453" stroke-width="1.4" stroke-linejoin="round"/><path d="M1237,170 L1246,161 L1257.5,161 L1248.5,170 Z" fill="#dcdcdc" stroke="#3b4453" stroke-width="1.4" stroke-linejoin="round"/><path d="M1250,180 L1257,173 L1262,178 L1255,185Z" fill="#f5c66a" stroke="#3b4453" stroke-width="1"/><path d="M1257,173 L1261,169 L1266,174 L1262,178Z" fill="#f0f0f0"/></svg>
<div style="position:absolute;left:1268.6px;top:129.19px;font-size:17.5px;line-height:17.5px;color:#ececec;font-family:'Liberation Sans', sans-serif;white-space:pre;">Make Current</div>
<div style="position:absolute;left:1268.6px;top:165.19px;font-size:17.5px;line-height:17.5px;color:#ececec;font-family:'Liberation Sans', sans-serif;white-space:pre;">Match Layer</div>
<svg style="position:absolute;left:0px;top:0px;overflow:visible;" width="1650" height="224" viewBox="0 0 1650 224"><path d="M1434,85 L1451,85 L1460,93 L1460,122 L1434,122 Z" fill="#8ccff8" stroke="#3b4453" stroke-width="1"/><path d="M1451,85 L1451,93 L1460,93Z" fill="#bfe6fd" stroke="#3b4453" stroke-width="0.8"/><path d="M1433,122.5 A10.6,10.6 0 1 0 1454,122.5 Z" fill="#6a717e"/><rect x="1414.5" y="101.5" width="29.5" height="21" fill="#6a717e" stroke="#dcdcdc" stroke-width="1.4"/><circle cx="1443.5" cy="122.5" r="10.6" fill="none" stroke="#dcdcdc" stroke-width="1.4"/><rect x="1412" y="120.5" width="4" height="4" fill="#dcdcdc"/><rect x="1472.5" y="98.5" width="14.5" height="10.5" fill="#6a717e" stroke="#dcdcdc" stroke-width="1.2"/><circle cx="1486.5" cy="108.6" r="4.4" fill="#6a717e" fill-opacity="0.6" stroke="#dcdcdc" stroke-width="1.2"/><rect x="1470.5" y="107" width="3" height="3" fill="#dcdcdc"/><polygon points="1494.60,95.40 1491.30,96.18 1493.77,98.50 1490.52,97.52 1491.50,100.77 1489.18,98.30 1488.40,101.60 1487.62,98.30 1485.30,100.77 1486.28,97.52 1483.03,98.50 1485.50,96.18 1482.20,95.40 1485.50,94.62 1483.03,92.30 1486.28,93.28 1485.30,90.03 1487.62,92.50 1488.40,89.20 1489.18,92.50 1491.50,90.03 1490.52,93.28 1493.77,92.30 1491.30,94.62" fill="#f5c66a"/><rect x="1472.5" y="131.5" width="14.5" height="12" fill="#6a717e" stroke="#dcdcdc" stroke-width="1.2"/><circle cx="1488.9" cy="142.9" r="4.4" fill="#6a717e" fill-opacity="0.6" stroke="#dcdcdc" stroke-width="1.2"/><rect x="1470.5" y="142" width="3" height="3" fill="#dcdcdc"/><g transform="translate(1482.5,138.5) rotate(-42.7)"><path d="M0,0 L4,-2.6 L4,2.6Z" fill="#c8c8c8"/><rect x="4" y="-2.6" width="10.691806012954132" height="5.2" fill="#f5c66a"/><rect x="14.191806012954132" y="-2.6" width="3.5" height="5.2" rx="1.5" fill="#f05050"/></g><path d="M1471,163.3 L1480.5,163.3 L1493,176 L1483.5,185 L1471,173.5 Z" fill="#dcdcdc"/><circle cx="1475.5" cy="167.5" r="1.3" fill="#3b4453"/><path d="M1476,172 L1484,179 M1479,168.5 L1487,175.5" stroke="#555" stroke-width="0.9" stroke-dasharray="1.5,1"/><g transform="translate(1483,172.5) rotate(-40.0)"><path d="M0,0 L4,-2.6 L4,2.6Z" fill="#c8c8c8"/><rect x="4" y="-2.6" width="9.324827717314509" height="5.2" fill="#f5c66a"/><rect x="12.824827717314509" y="-2.6" width="3.5" height="5.2" rx="1.5" fill="#f05050"/></g></svg>
<div style="position:absolute;left:1414.8px;top:143.59px;font-size:17.5px;line-height:17.5px;color:#ececec;font-family:'Liberation Sans', sans-serif;white-space:pre;">Insert</div>
<svg style="position:absolute;left:1431.7px;top:169.0px;overflow:visible;" width="8" height="5" viewBox="0 0 8 5"><path d="M0,0 L8,0 L4.0,5 Z" fill="#d6d6d6"/></svg>
<div style="position:absolute;left:1502.4px;top:92.89px;font-size:17.5px;line-height:17.5px;color:#ececec;font-family:'Liberation Sans', sans-serif;white-space:pre;">Create</div>
<div style="position:absolute;left:1502.4px;top:129.19px;font-size:17.5px;line-height:17.5px;color:#ececec;font-family:'Liberation Sans', sans-serif;white-space:pre;">Edit</div>
<div style="position:absolute;left:1502.4px;top:165.19px;font-size:17.5px;line-height:17.5px;color:#ececec;font-family:'Liberation Sans', sans-serif;white-space:pre;">Edit Attributes</div>
<svg style="position:absolute;left:1626.8px;top:169.5px;overflow:visible;" width="8" height="5" viewBox="0 0 8 5"><path d="M0,0 L8,0 L4.0,5 Z" fill="#d6d6d6"/></svg>
<svg style="position:absolute;left:0px;top:0px;overflow:visible;" width="1800" height="224" viewBox="0 0 1800 224"><rect x="1672" y="89" width="30" height="42" fill="#d8d8d8"/><rect x="1675.5" y="92.5" width="20" height="15" fill="#8ccff8" stroke="#333" stroke-width="1"/><path d="M1677,115.5 L1695,115.5 M1677,123.5 L1692,123.5" stroke="#555" stroke-width="1"/><rect x="1680" y="113" width="2.2" height="5" fill="#555"/><rect x="1689.5" y="121" width="2.2" height="5" fill="#555"/><g transform="translate(1707.8,126.4) rotate(45)"><rect x="-2.8" y="-15" width="5.6" height="6" fill="#f0f0f0"/><rect x="-7" y="-10" width="14" height="10" rx="1.5" fill="#f0f0f0" stroke="#3b4453" stroke-width="0.8"/><path d="M-9.5,0 L9.5,0 L9.5,8.6 L-9.5,8.6 Z" fill="#fcd27a" stroke="#3b4453" stroke-width="0.8"/></g><path d="M1753.8,101.1 L1765.70,101.10 A11.9,11.9 0 0 1 1759.75,111.41 Z" fill="#e85050"/><path d="M1753.8,101.1 L1759.75,111.41 A11.9,11.9 0 0 1 1747.85,111.41 Z" fill="#8a50f0"/><path d="M1753.8,101.1 L1747.85,111.41 A11.9,11.9 0 0 1 1741.90,101.10 Z" fill="#10b0d0"/><path d="M1753.8,101.1 L1741.90,101.10 A11.9,11.9 0 0 1 1747.85,90.79 Z" fill="#50c878"/><path d="M1753.8,101.1 L1747.85,90.79 A11.9,11.9 0 0 1 1759.75,90.79 Z" fill="#ffc030"/><path d="M1753.8,101.1 L1759.75,90.79 A11.9,11.9 0 0 1 1765.70,101.10 Z" fill="#ff8a30"/><rect x="1742" y="124.8" width="24" height="1.4" fill="#dcdcdc"/><rect x="1742" y="129" width="24" height="3" fill="#dcdcdc"/><rect x="1742" y="135" width="24" height="5" fill="#dcdcdc"/><rect x="1742" y="143" width="24" height="6" fill="#dcdcdc"/><g stroke="#dcdcdc" stroke-width="1.3"><path d="M1742,164.4 L1765,164.4" stroke-dasharray="1.6,2.5"/><path d="M1742,168.5 L1765,168.5" stroke-dasharray="3.5,1.5"/><path d="M1742,172.4 L1765,172.4"/><path d="M1742,176.5 L1765,176.5" stroke-dasharray="5,1.5"/><path d="M1742,180.4 L1765,180.4" stroke-dasharray="5.5,2"/></g></svg>
<div style="position:absolute;left:1670.5px;top:147.39px;font-size:17.5px;line-height:17.5px;color:#ececec;font-family:'Liberation Sans', sans-serif;white-space:pre;">Match</div>
<div style="position:absolute;left:1654.9px;top:171.99px;font-size:17.5px;line-height:17.5px;color:#ececec;font-family:'Liberation Sans', sans-serif;white-space:pre;">Properties</div>
<div style="position:absolute;left:1770px;top:84.5px;width:268px;height:32.5px;background:#4b5668;border:2px solid #2c3340;"></div>
<div style="position:absolute;left:1770px;top:122px;width:268px;height:32px;background:#4b5668;border:2px solid #2c3340;"></div>
<div style="position:absolute;left:1770px;top:158.5px;width:268px;height:31.0px;background:#4b5668;border:2px solid #2c3340;"></div>
<div style="position:absolute;left:1780px;top:90px;width:23px;height:23px;background:#00ffff;border:1px solid #d0d0d0;"></div>
<div style="position:absolute;left:1809px;top:92.89px;font-size:17.5px;line-height:17.5px;color:#ececec;font-family:'Liberation Sans', sans-serif;white-space:pre;">ByLayer</div>
<div style="position:absolute;left:1779px;top:136.5px;width:96px;height:2.0px;background:#f0f0f0;"></div>
<div style="position:absolute;left:1878px;top:129.19px;font-size:17.5px;line-height:17.5px;color:#ececec;font-family:'Liberation Sans', sans-serif;white-space:pre;">ByLayer</div>
<div style="position:absolute;left:1779px;top:172px;width:96px;height:2px;background:#f0f0f0;"></div>
<div style="position:absolute;left:1878px;top:165.19px;font-size:17.5px;line-height:17.5px;color:#ececec;font-family:'Liberation Sans', sans-serif;white-space:pre;">ByLayer</div>
<svg style="position:absolute;left:2023.5px;top:98.0px;overflow:visible;" width="11" height="6" viewBox="0 0 11 6"><path d="M0,0 L11,0 L5.5,6 Z" fill="#e0e0e0"/></svg>
<svg style="position:absolute;left:2023.5px;top:134.5px;overflow:visible;" width="11" height="6" viewBox="0 0 11 6"><path d="M0,0 L11,0 L5.5,6 Z" fill="#e0e0e0"/></svg>
<svg style="position:absolute;left:2023.5px;top:170.5px;overflow:visible;" width="11" height="6" viewBox="0 0 11 6"><path d="M0,0 L11,0 L5.5,6 Z" fill="#e0e0e0"/></svg>
<svg style="position:absolute;left:0px;top:0px;overflow:visible;" width="2150" height="224" viewBox="0 0 2150 224"><path d="M2060,96.5 L2054.5,96.5 L2054.5,135.5 L2060,135.5 M2081,114 L2086.5,114 L2086.5,135.5 L2081,135.5" fill="none" stroke="#f0f0f0" stroke-width="1.4"/><rect x="2063.5" y="101.5" width="14.5" height="11" fill="#4a6a90" stroke="#5ab4ee" stroke-width="1.3"/><circle cx="2070.5" cy="124.7" r="7.3" fill="#6a717e" stroke="#c8c8c8" stroke-width="1.2"/><polygon points="2100.10,101.10 2093.05,102.71 2097.81,108.15 2091.16,105.31 2091.81,112.51 2088.10,106.30 2084.39,112.51 2085.04,105.31 2078.39,108.15 2083.15,102.71 2076.10,101.10 2083.15,99.49 2078.39,94.05 2085.04,96.89 2084.39,89.69 2088.10,95.90 2091.81,89.69 2091.16,96.89 2097.81,94.05 2093.05,99.49" fill="#f5c66a"/><rect x="2116" y="92.5" width="9" height="7" fill="#4a6a90" stroke="#5ab4ee" stroke-width="1.2"/><circle cx="2120.5" cy="105.3" r="4.2" fill="#6a717e" stroke="#c8c8c8" stroke-width="1.1"/><path d="M2128.5,89.5 L2131.5,89.5 L2131.5,96 M2131.5,108 L2131.5,112.5 L2128.5,112.5" fill="none" stroke="#f0f0f0" stroke-width="1.2"/><path d="M2128.5,98.5 L2135.5,105.5 M2135.5,98.5 L2128.5,105.5" stroke="#f05050" stroke-width="2.2"/><path d="M2116.5,125.5 L2113.5,125.5 L2113.5,146 L2116.5,146 M2124.5,125.5 L2127.5,125.5 L2127.5,146 L2124.5,146" fill="none" stroke="#f0f0f0" stroke-width="1.2"/><rect x="2117.5" y="128.7" width="7" height="5" fill="#4a6a90" stroke="#5ab4ee" stroke-width="1.1"/><circle cx="2120.5" cy="139.3" r="3.4" fill="#6a717e" stroke="#c8c8c8" stroke-width="1.1"/><g transform="translate(2125.5,148.5) rotate(-42.4)"><path d="M0,0 L4,-2.6 L4,2.6Z" fill="#c8c8c8"/><rect x="4" y="-2.6" width="8.572411502397436" height="5.2" fill="#f5c66a"/><rect x="12.072411502397436" y="-2.6" width="3.5" height="5.2" rx="1.5" fill="#f05050"/></g></svg>
<div style="position:absolute;left:2107px;top:155.5px;width:35px;height:32.0px;background:#48566b;border:2px solid #5aa0d8;"></div>
<svg style="position:absolute;left:0px;top:0px;overflow:visible;" width="2150" height="224" viewBox="0 0 2150 224"><path d="M2118,161 L2115,161 L2115,181 L2118,181 M2126,161 L2129,161 L2129,170" fill="none" stroke="#e0e0e0" stroke-width="1.2"/><rect x="2118" y="164" width="7" height="5" fill="none" stroke="#60d060" stroke-width="1.2"/><circle cx="2122" cy="175" r="3.5" fill="none" stroke="#60d060" stroke-width="1.2"/><path d="M2128,172 L2128,185 L2131,182 L2134,187 L2136,186 L2133,181 L2137,181Z" fill="#f0f0f0"/></svg>
<div style="position:absolute;left:2052px;top:145.89px;font-size:17.5px;line-height:17.5px;color:#ececec;font-family:'Liberation Sans', sans-serif;white-space:pre;">Group</div>
<svg style="position:absolute;left:0px;top:0px;overflow:visible;" width="2300" height="224" viewBox="0 0 2300 224"><rect x="2180" y="107" width="42" height="9.5" fill="#fcd27a"/><path d="M2184,106.5 L2184,110 M2188,106.5 L2188,109 M2192,106.5 L2192,110 M2196,106.5 L2196,109 M2200,106.5 L2200,110 M2204,106.5 L2204,109 M2208,106.5 L2208,110 M2212,106.5 L2212,109 M2216,106.5 L2216,110" stroke="#3b4453" stroke-width="0.9"/><path d="M2259,95 L2259,112 L2263,108 L2267,114 L2269,113 L2266,107 L2271,107Z" fill="#f0f0f0"/><path d="M2268,89 L2263,97 L2267,97 L2264,103 L2272,94 L2268,94 L2271,89Z" fill="#f5c66a"/><rect x="2269" y="99" width="13" height="12" fill="#f0f0f0"/><path d="M2272,102 L2280,102 M2272,105 L2280,105 M2272,108 L2280,108" stroke="#3a80d0" stroke-width="1.2"/><rect x="2259" y="126" width="22" height="21" fill="none" stroke="#60d060" stroke-width="1.2" stroke-dasharray="2,1.5"/><rect x="2263" y="131" width="10" height="13" fill="#5ab870"/><rect x="2267" y="128" width="13" height="12" fill="#70d890"/><path d="M2274,136 L2274,150 L2277,147 L2280,152 L2282,151 L2279,146 L2283,146Z" fill="#f0f0f0"/><rect x="2262" y="160" width="17" height="24" fill="#d0d0d0"/><rect x="2264" y="162" width="13" height="5" fill="#555"/><path d="M2265,171 h3 v2.5 h-3z M2269.5,171 h3 v2.5 h-3z M2274,171 h3 v2.5 h-3z M2265,175 h3 v2.5 h-3z M2269.5,175 h3 v2.5 h-3z M2274,175 h3 v2.5 h-3z M2265,179 h3 v2.5 h-3z M2269.5,179 h3 v2.5 h-3z M2274,179 h3 v2.5 h-3z" fill="#555"/></svg>
<div style="position:absolute;left:2167.5px;top:145.89px;font-size:17.5px;line-height:17.5px;color:#ececec;font-family:'Liberation Sans', sans-serif;white-space:pre;">Measure</div>
<svg style="position:absolute;left:2196.4px;top:170.1px;overflow:visible;" width="8" height="5" viewBox="0 0 8 5"><path d="M0,0 L8,0 L4.0,5 Z" fill="#d6d6d6"/></svg>
<svg style="position:absolute;left:0px;top:0px;overflow:visible;" width="2556" height="224" viewBox="0 0 2556 224"><rect x="2315" y="93" width="33" height="35" fill="#d8a86a"/><rect x="2326" y="88" width="12" height="6" rx="2" fill="#e8e8e8"/><path d="M2326,103 L2347,103 L2353,109 L2353,136 L2326,136Z" fill="#dcdcdc"/><path d="M2347,103 L2347,109 L2353,109Z" fill="#f4f4f4"/><path d="M2379,89 L2393,89 L2397,93 L2397,110 L2379,110Z" fill="#c8c8c8"/><path d="M2381,94 L2392,94 M2381,98 L2392,98 M2381,102 L2388,102" stroke="#777" stroke-width="1"/><path d="M2389,95 L2400,108 M2398,95 L2390,108" stroke="#f0f0f0" stroke-width="1.5"/><circle cx="2390" cy="110" r="2.5" fill="none" stroke="#f0f0f0" stroke-width="1.3"/><circle cx="2399" cy="110" r="2.5" fill="none" stroke="#f0f0f0" stroke-width="1.3"/><path d="M2382,125 L2390,125 L2393,128 L2393,144 L2382,144Z" fill="#b8b8b8"/><path d="M2385,129 L2394,129 L2399,134 L2399,149 L2385,149Z" fill="#dcdcdc"/><path d="M2453,93 L2474,93 L2474,107 L2501,107 L2501,129 L2453,129Z" fill="#dcdcdc"/></svg>
<div style="position:absolute;left:2313.5px;top:145.89px;font-size:17.5px;line-height:17.5px;color:#ececec;font-family:'Liberation Sans', sans-serif;white-space:pre;">Paste</div>
<svg style="position:absolute;left:2329.0px;top:170.1px;overflow:visible;" width="8" height="5" viewBox="0 0 8 5"><path d="M0,0 L8,0 L4.0,5 Z" fill="#d6d6d6"/></svg>
<svg style="position:absolute;left:2410.0px;top:97.5px;overflow:visible;" width="8" height="5" viewBox="0 0 8 5"><path d="M0,0 L8,0 L4.0,5 Z" fill="#d6d6d6"/></svg>
<svg style="position:absolute;left:2410.0px;top:133.5px;overflow:visible;" width="8" height="5" viewBox="0 0 8 5"><path d="M0,0 L8,0 L4.0,5 Z" fill="#d6d6d6"/></svg>
<div style="position:absolute;left:2459.5px;top:145.89px;font-size:17.5px;line-height:17.5px;color:#ececec;font-family:'Liberation Sans', sans-serif;white-space:pre;">Base</div>
<svg style="position:absolute;left:2472.5px;top:170.1px;overflow:visible;" width="8" height="5" viewBox="0 0 8 5"><path d="M0,0 L8,0 L4.0,5 Z" fill="#d6d6d6"/></svg>
<svg style="position:absolute;left:0px;top:0px;overflow:visible;" width="400" height="270" viewBox="0 0 400 270"><path d="M104,229 L225,229 L210,265 L89,265 Z" fill="#3b4453"/><path d="M18,259 L29,235 M272,259 L283,235" stroke="#5a6270" stroke-width="1.3"/><path d="M195,241 L207,253 M207,241 L195,253" stroke="#a0a4ab" stroke-width="2.3"/><path d="M247,238 L247,256 M238,247 L256,247" stroke="#e8e8e8" stroke-width="2.6"/></svg>
<div style="position:absolute;left:42.3px;top:239.61px;font-size:17px;line-height:17px;color:#ececec;font-family:'Liberation Sans', sans-serif;white-space:pre;">Start</div>
<div style="position:absolute;left:114.2px;top:239.61px;font-size:17px;line-height:17px;color:#ffffff;font-family:'Liberation Sans', sans-serif;white-space:pre;font-weight:bold;">solidos*</div>
<svg style="position:absolute;left:0;top:0" width="2556" height="1528"><defs><clipPath id="vp"><rect x="42" y="271" width="2509" height="1163"/></clipPath></defs><g clip-path="url(#vp)"><polygon points="555.2,886.7 656.2,688.6 1103.2,670.8 1279.7,857.3 940.9,990.4" fill="#116468" stroke="none" shape-rendering="crispEdges"/><polygon points="1102.5,670.8 1443.5,537.2 1829.5,641.4 1728.3,840.7 1279.7,857.3" fill="#116468" stroke="none" shape-rendering="crispEdges"/><polygon points="1280.2,857.7 1666.1,961.8 1565.3,1159.2 1116.5,1177.6 940.9,990.7" fill="#116468" stroke="none" shape-rendering="crispEdges"/><line x1="728.4" y1="271.3" x2="1102.5" y2="670.8" stroke="#00f0f8" stroke-width="1" shape-rendering="crispEdges"/><line x1="1280.2" y1="857.7" x2="1821" y2="1434" stroke="#00f0f8" stroke-width="1" shape-rendering="crispEdges"/><line x1="1334.5" y1="514.5" x2="1334.5" y2="852" stroke="#00f0f8" stroke-width="1" shape-rendering="crispEdges"/><line x1="1728.3" y1="840.7" x2="1402" y2="903" stroke="#00f0f8" stroke-width="1" shape-rendering="crispEdges"/><polygon points="555.2,886.7 656.2,688.6 1103.2,670.8 1279.7,857.3 940.9,990.4" fill="none" stroke="#f4f4f4" stroke-width="1" shape-rendering="crispEdges"/><polygon points="1102.5,670.8 1443.5,537.2 1829.5,641.4 1728.3,840.7 1279.7,857.3" fill="none" stroke="#f4f4f4" stroke-width="1" shape-rendering="crispEdges"/><polygon points="1280.2,857.7 1666.1,961.8 1565.3,1159.2 1116.5,1177.6 940.9,990.7" fill="none" stroke="#f4f4f4" stroke-width="1" shape-rendering="crispEdges"/><line x1="1334" y1="913" x2="1334" y2="853" stroke="#3f7a35" stroke-width="9" stroke-linecap="round"/><line x1="1336" y1="911" x2="1336" y2="852" stroke="#78b868" stroke-width="2.5"/><line x1="1336" y1="913" x2="1402" y2="903" stroke="#a84848" stroke-width="8" stroke-linecap="round"/><line x1="1336" y1="911" x2="1402" y2="901" stroke="#d07070" stroke-width="2.5"/><line x1="1334" y1="914" x2="1362" y2="945" stroke="#2f5fb0" stroke-width="8" stroke-linecap="round"/><line x1="1334" y1="912" x2="1362" y2="943" stroke="#5080d0" stroke-width="2.5"/><path d="M1331,827 L1340.4,836 L1349,828 M1340.4,836 L1340.4,845" stroke="#20a020" stroke-width="1.2" fill="none"/><path d="M1398,878 L1416,895 M1416,878 L1398,895" stroke="#c03030" stroke-width="1.2" fill="none"/><path d="M1359,922 L1378,922 L1360,940 L1377,940" stroke="#2070e0" stroke-width="1.2" fill="none"/><line x1="1980.5" y1="1085" x2="1980.5" y2="1165" stroke="#78f078" stroke-width="1.3"/><line x1="1980.5" y1="1174" x2="1980.5" y2="1212" stroke="#78f078" stroke-width="1.3"/><line x1="1936.9" y1="1177.4" x2="1976" y2="1170.6" stroke="#f07c7c" stroke-width="1.3"/><line x1="1985" y1="1168.6" x2="2069" y2="1154.5" stroke="#f07c7c" stroke-width="1.3"/><line x1="1963.2" y1="1151" x2="1976" y2="1165" stroke="#7474f0" stroke-width="1.3"/><line x1="1984" y1="1173.5" x2="2017.8" y2="1208.7" stroke="#7474f0" stroke-width="1.3"/><rect x="1976.5" y="1165.5" width="8" height="8" fill="none" stroke="#ffffff" stroke-width="1.3"/></g></svg>
<div style="position:absolute;left:46.5px;top:280.26px;font-size:18px;line-height:18px;color:#e8e8e8;font-family:'Liberation Sans', sans-serif;white-space:pre;">[</div>
<div style="position:absolute;left:53.2px;top:285.3px;width:10.199999999999996px;height:1.5px;background:#e8e8e8;"></div>
<div style="position:absolute;left:65.8px;top:280.26px;font-size:18px;line-height:18px;color:#e8e8e8;font-family:'Liberation Sans', sans-serif;white-space:pre;">]</div>
<div style="position:absolute;left:71.6px;top:280.60px;font-size:17.6px;line-height:17.6px;color:#e8e8e8;font-family:'Liberation Sans', sans-serif;white-space:pre;">[Custom View][X-Ray]</div>
<div style="position:absolute;left:2464px;top:291px;width:15px;height:4px;background:#e0e0e0;"></div>
<svg style="position:absolute;left:2494px;top:282px;overflow:visible;" width="18" height="18" viewBox="0 0 18 18"><rect x="1.5" y="5.5" width="10" height="10" fill="none" stroke="#e0e0e0" stroke-width="3"/><path d="M6,2 H16 V12" fill="none" stroke="#e0e0e0" stroke-width="2"/></svg>
<svg style="position:absolute;left:2523px;top:283px;overflow:visible;" width="16" height="16" viewBox="0 0 16 16"><path d="M2,2 L14,14 M14,2 L2,14" stroke="#e8e8e8" stroke-width="3"/></svg>
<svg style="position:absolute;left:0;top:0" width="2556" height="1528"><path fill-rule="evenodd" fill="#454c56" transform="rotate(5 2428 475)" d="M2333,475 A95,47.5 0 1 0 2523,475 A95,47.5 0 1 0 2333,475 Z M2353,475 A75,34 0 1 0 2503,475 A75,34 0 1 0 2353,475 Z"/><defs><radialGradient id="glow" cx="0.5" cy="0.5" r="0.5"><stop offset="0" stop-color="#3a414b" stop-opacity="0.9"/><stop offset="1" stop-color="#212830" stop-opacity="0"/></radialGradient><linearGradient id="lf" x1="0" y1="0" x2="1" y2="0"><stop offset="0" stop-color="#a6a8ab"/><stop offset="1" stop-color="#9a9c9f"/></linearGradient></defs><ellipse cx="2430" cy="430" rx="75" ry="70" fill="url(#glow)"/><polygon points="2382.3,385.7 2446.8,376.3 2479.7,403 2407.9,414.1" fill="#a9abae"/><polygon points="2407.9,414.1 2479.7,403 2476.8,467.5 2409,482.4" fill="#b0b3b6"/><polygon points="2382.3,385.7 2407.9,414.1 2409,482.4 2384.5,452.4" fill="url(#lf)"/><path d="M2382.3,385.7 L2407.9,414.1 L2479.7,403 M2407.9,414.1 L2409,482.4" fill="none" stroke="#5c6066" stroke-width="0.9" stroke-dasharray="4,3"/><polygon points="2403.3,409 2418,406.5 2421.7,426 2406,428" fill="#9ea2aa"/><text x="2443.5" y="449" font-family="Liberation Sans" font-weight="bold" font-size="20" fill="#5a5e66" stroke="#5a5e66" stroke-width="0.7" transform="rotate(-8 2443.5 442)" text-anchor="middle" textLength="29" lengthAdjust="spacingAndGlyphs">TOP</text><text x="2428" y="398" font-family="Liberation Sans" font-weight="bold" font-size="11" fill="#6a6e74" transform="rotate(171.5 2428 394)" text-anchor="middle" textLength="40" lengthAdjust="spacingAndGlyphs">BACK</text><text x="2396" y="438.5" font-family="Liberation Sans" font-weight="bold" font-size="10" fill="#6a6e74" transform="rotate(84 2396 435)" text-anchor="middle" textLength="35" lengthAdjust="spacingAndGlyphs">LEFT</text><g font-family="Liberation Sans" font-weight="bold" font-size="24" fill="#c0c2c6" stroke="#c0c2c6" stroke-width="0.9" text-anchor="middle" dominant-baseline="central"><text transform="translate(2345.2,453) rotate(-6) skewX(-22) scale(1.5,0.6) rotate(-90)">S</text><text transform="translate(2517,474) rotate(10) skewX(-30) scale(1.05,0.62) rotate(90)">N</text><text transform="translate(2404.2,515.5) rotate(7) skewX(-25) scale(1.35,0.7) rotate(90)">E</text></g></svg>
<div style="position:absolute;left:2380px;top:558px;width:98px;height:25px;background:#868b96;border-radius:5px;"></div>
<div style="position:absolute;left:2385px;top:564.30px;font-size:15px;line-height:15px;color:#5d616b;font-family:'Liberation Sans', sans-serif;white-space:pre;">Unnamed</div>
<svg style="position:absolute;left:2458px;top:566px;overflow:visible;" width="12" height="8" viewBox="0 0 12 8"><path d="M1,1 L11,1 L6,7 Z" fill="none" stroke="#6a6e78" stroke-width="1"/></svg>
<div style="position:absolute;left:2503px;top:616px;width:46px;height:310px;background:#4e545c;border-radius:4px;"></div>
<svg style="position:absolute;left:0;top:0" width="2556" height="1528"><g fill="none" stroke="#3d424a" stroke-width="2"><circle cx="2540" cy="623" r="4"/><path d="M2538,621 L2542,625 M2542,621 L2538,625" stroke-width="1"/><path d="M2526,641 L2537,641 Q2542,641 2542,646 L2542,657 A16,16 0 1 1 2526,641 Z"/><circle cx="2526" cy="656" r="7.5"/><path d="M2521,661 L2515,668 M2531,661 L2537,668" stroke-width="1.5"/><path d="M2507,697.5 L2546,697.5 M2507,858.5 L2546,858.5" stroke-width="0.8" stroke="#454a52"/><path d="M2514,737 L2508,724 Q2507,720 2511,720 L2515,726 L2514,707 Q2516,703 2518,707 L2519,718 L2520,704 Q2523,700 2525,704 L2525,717 L2527,706 Q2530,703 2532,707 L2531,719 L2534,711 Q2537,709 2538,713 L2537,728 Q2535,738 2526,738 Z"/><path d="M2508,746 L2530,768 M2530,746 L2508,768 M2508,746 L2508,752 M2508,746 L2514,746 M2530,746 L2524,746 M2530,746 L2530,752 M2508,768 L2508,762 M2508,768 L2514,768" stroke-width="1.8"/><circle cx="2533.8" cy="769.4" r="6.5" fill="#4e545c" stroke-width="2.2"/><path d="M2538.5,774 L2543,778.6" stroke-width="3"/><path d="M2526,803 L2526,835" stroke-width="4"/><path d="M2520,810 L2526,803 L2532,810" stroke-width="2"/><path d="M2514,826 Q2507,822 2510,819 Q2516,814 2526,814 Q2542,814 2542,822 Q2542,828 2530,829" stroke-width="1.8"/><path d="M2512,822 L2512,830 L2518,828Z" fill="#3d424a"/><rect x="2508.5" y="866" width="8.5" height="9.5"/><rect x="2520.5" y="866" width="8.5" height="9.5"/><rect x="2532.5" y="866" width="8.5" height="9.5"/><rect x="2509" y="880" width="23.5" height="19.5"/><circle cx="2540" cy="917" r="4"/><path d="M2537,916 L2543,916 M2537,918.5 L2543,918.5" stroke-width="1"/></g><g fill="#3d424a"><path d="M2521.5,684.5 L2531.5,684.5 L2526.5,689.5Z"/><path d="M2521.5,789.5 L2531.5,789.5 L2526.5,794.5Z"/><path d="M2521.5,846 L2531.5,846 L2526.5,851Z"/><path d="M2515,884 L2525,889.5 L2515,895Z"/></g></svg>
<div style="position:absolute;left:557px;top:1249px;width:43px;height:184px;background:#272d37;border-radius:4px;"></div>
<div style="position:absolute;left:594px;top:1250px;width:1439px;height:151px;background:#979797;"></div>
<div style="position:absolute;left:594px;top:1403px;width:1439px;height:29px;background:#bdbdbd;"></div>
<svg style="position:absolute;left:0;top:0" width="2556" height="1528"><line x1="1649.7" y1="1250" x2="1821" y2="1432" stroke="#7ae0e6" stroke-width="1"/></svg>
<div style="position:absolute;left:598.3px;top:1264.18px;font-size:18.33px;line-height:18.33px;color:#141414;font-family:'Liberation Mono', monospace;white-space:pre;">Specify origin of UCS or [Face/NAmed/OBject/Previous/View/World/X/Y/Z/ZAxis] &lt;World&gt;:</div>
<div style="position:absolute;left:598.3px;top:1287.44px;font-size:18.33px;line-height:18.33px;color:#141414;font-family:'Liberation Mono', monospace;white-space:pre;">Specify point on X-axis or &lt;accept&gt;:</div>
<div style="position:absolute;left:598.3px;top:1310.70px;font-size:18.33px;line-height:18.33px;color:#141414;font-family:'Liberation Mono', monospace;white-space:pre;">Specify point on the XY plane or &lt;accept&gt;:</div>
<div style="position:absolute;left:598.3px;top:1333.96px;font-size:18.33px;line-height:18.33px;color:#141414;font-family:'Liberation Mono', monospace;white-space:pre;">Command:</div>
<div style="position:absolute;left:598.3px;top:1357.22px;font-size:18.33px;line-height:18.33px;color:#141414;font-family:'Liberation Mono', monospace;white-space:pre;">Command:</div>
<div style="position:absolute;left:598.3px;top:1380.48px;font-size:18.33px;line-height:18.33px;color:#141414;font-family:'Liberation Mono', monospace;white-space:pre;">Command:  &lt;Ortho off&gt;</div>
<div style="position:absolute;left:650px;top:1409.48px;font-size:18.33px;line-height:18.33px;color:#6e6e6e;font-family:'Liberation Mono', monospace;white-space:pre;font-style:italic;">Type a command</div>
<div style="position:absolute;left:29.4px;top:951.6px;transform-origin:0 0;transform:rotate(-90deg);font-family:'Liberation Sans',sans-serif;font-size:17.3px;line-height:17.3px;color:#e6e6e6;white-space:pre;"><span style="position:relative;top:-14.6px">Layer Properties Manager</span></div>
<svg style="position:absolute;left:557px;top:1249px;overflow:visible;" width="43" height="184" viewBox="0 0 43 184"><path d="M6,8.5 h2.2 M10.5,8.5 h2.2 M15,8.5 h2.2 M19.5,8.5 h2.2 M24,8.5 h2.2 M28.5,8.5 h2.2" stroke="#b8b8b8" stroke-width="1.4"/><path d="M12,29.5 L23.5,40.5 M23.5,29.5 L12,40.5" stroke="#c4c4c4" stroke-width="2.2"/><path d="M9,80 L20,69" stroke="#9aa0a8" stroke-width="4" stroke-linecap="round"/><path d="M18,71 A7,7 0 0 1 27,61 L23,65 L25,68 L28,69 L31,65 A7,7 0 0 1 21,74 Z" fill="#9aa0a8"/></svg>
<svg style="position:absolute;left:601px;top:1409px;overflow:visible;" width="36" height="20" viewBox="0 0 36 20"><rect x="0.5" y="0.5" width="23" height="17" fill="none" stroke="#444" stroke-width="1"/><rect x="0.5" y="0.5" width="23" height="3" fill="#444"/><path d="M3,9 L6,11 L3,13 M7,14 L12,14" stroke="#444" stroke-width="1" fill="none"/><path d="M27,8 L35,8 L31,12Z" fill="#444"/></svg>
<svg style="position:absolute;left:2016px;top:1414.5px;overflow:visible;" width="12" height="6.5" viewBox="0 0 12 6.5"><path d="M0,6.5 L6,0 L12,6.5Z" fill="#555"/></svg>
<svg style="position:absolute;left:0px;top:1436px;overflow:visible;" width="300" height="50" viewBox="0 0 300 50"><path d="M32,4 L122,4 L107,40 L17,40 Z" fill="#3b4453"/><path d="M166,34 L176,10 M226,34 L236,10" stroke="#5a6270" stroke-width="1.3"/><path d="M200,13 L200,31 M191,22 L209,22" stroke="#e8e8e8" stroke-width="2.6"/></svg>
<div style="position:absolute;left:42px;top:1452.19px;font-size:17.5px;line-height:17.5px;color:#ffffff;font-family:'Liberation Sans', sans-serif;white-space:pre;font-weight:bold;">Model</div>
<div style="position:absolute;left:133px;top:1451.19px;font-size:17.5px;line-height:17.5px;color:#ececec;font-family:'Liberation Sans', sans-serif;white-space:pre;">a3</div>
<div style="position:absolute;left:1644px;top:1486px;width:72px;height:36px;background:#3b4453;"></div>
<div style="position:absolute;left:1722px;top:1486px;width:96px;height:36px;background:#3b4453;"></div>
<div style="position:absolute;left:1824px;top:1486px;width:36px;height:36px;background:#3b4453;"></div>
<div style="position:absolute;left:1862px;top:1486px;width:156px;height:36px;background:#3b4453;"></div>
<div style="position:absolute;left:2021px;top:1486px;width:95px;height:36px;background:#3b4453;"></div>
<div style="position:absolute;left:2123px;top:1486px;width:157px;height:36px;background:#3b4453;"></div>
<div style="position:absolute;left:2286px;top:1486px;width:60px;height:36px;background:#3b4453;"></div>
<div style="position:absolute;left:2348px;top:1486px;width:36px;height:36px;background:#3b4453;"></div>
<div style="position:absolute;left:2390px;top:1486px;width:36px;height:36px;background:#3b4453;"></div>
<div style="position:absolute;left:2430px;top:1486px;width:44px;height:36px;background:#3b4453;"></div>
<div style="position:absolute;left:2478px;top:1486px;width:72px;height:36px;background:#3b4453;"></div>
<div style="position:absolute;left:2021px;top:1487px;width:34px;height:35px;background:#5d8ec6;"></div>
<div style="position:absolute;left:2057px;top:1487px;width:34px;height:35px;background:#5d8ec6;"></div>
<div style="position:absolute;left:2123px;top:1487px;width:34px;height:35px;background:#5d8ec6;"></div>
<div style="position:absolute;left:1650px;top:1496.61px;font-size:17px;line-height:17px;color:#ffffff;font-family:'Liberation Sans', sans-serif;white-space:pre;font-weight:bold;">MODEL</div>
<svg style="position:absolute;left:0;top:0" width="2556" height="1528"><path d="M1729,1493 L1729,1515 M1737,1493 L1737,1515 M1745,1493 L1745,1515 M1725,1498 L1751,1498 M1725,1505 L1751,1505 M1725,1511 L1751,1511" stroke="#dcdcdc" stroke-width="1.3"/><rect x="1767.0" y="1495.0" width="3" height="3" fill="#dcdcdc"/><rect x="1767.0" y="1502.5" width="3" height="3" fill="#dcdcdc"/><rect x="1767.0" y="1510.0" width="3" height="3" fill="#dcdcdc"/><rect x="1775.5" y="1495.0" width="3" height="3" fill="#dcdcdc"/><rect x="1775.5" y="1502.5" width="3" height="3" fill="#dcdcdc"/><rect x="1775.5" y="1510.0" width="3" height="3" fill="#dcdcdc"/><rect x="1784.0" y="1495.0" width="3" height="3" fill="#dcdcdc"/><rect x="1784.0" y="1502.5" width="3" height="3" fill="#dcdcdc"/><rect x="1784.0" y="1510.0" width="3" height="3" fill="#dcdcdc"/><path d="M1801,1501 L1811,1501 L1806,1507Z" fill="#dcdcdc"/><path d="M1835,1492 L1835,1502 M1830,1497 L1840,1497" stroke="#dcdcdc" stroke-width="1.3"/><rect x="1839" y="1502" width="15" height="6" fill="#dcdcdc" stroke="#dcdcdc"/><rect x="1840" y="1503" width="13" height="4" fill="#dcdcdc"/><path d="M1868,1492 L1868,1516 L1892,1516 M1868,1507 L1876,1507 L1876,1516" stroke="#dcdcdc" stroke-width="1.3" fill="none"/><circle cx="1914" cy="1504" r="9.5" fill="none" stroke="#dcdcdc" stroke-width="1.3"/><path d="M1915,1504 L1928,1494 M1915,1504 L1928,1504" stroke="#dcdcdc" stroke-width="1.3"/><path d="M1940,1501 L1950,1501 L1945,1507Z M2000,1501 L2010,1501 L2005,1507Z" fill="#dcdcdc"/><path d="M1967,1494 L1985,1513" stroke="#e05050" stroke-width="1.3"/><path d="M1976,1492 L1976,1516" stroke="#50c050" stroke-width="1.3"/><rect x="1974" y="1502" width="4" height="4" fill="#3b4453" stroke="#fff" stroke-width="1"/><path d="M2027,1513 L2050,1513 M2028,1512 L2046,1494" stroke="#ffffff" stroke-width="1.3"/><rect x="2036" y="1502" width="4" height="4" fill="#fff"/><rect x="2063.5" y="1496.5" width="21" height="18" fill="none" stroke="#fff" stroke-width="1.3"/><rect x="2060" y="1493" width="6" height="6" fill="#5d8ec6" stroke="#fff" stroke-width="1.3"/><path d="M2098,1501 L2108,1501 L2103,1507Z" fill="#dcdcdc"/><path d="M2140,1492 L2150,1515 L2140,1509 L2130,1515 Z" fill="#ffffff"/><circle cx="2147" cy="1498" r="4.5" fill="none" stroke="#fff" stroke-width="1.3"/><path d="M2175,1492 L2185,1515 L2175,1509 L2165,1515 Z" fill="#d8d8d8"/><path d="M2186,1492 L2181,1499 L2185,1499 L2182,1505 L2189,1497 L2185,1497 Z" fill="#d8d8d8"/><path d="M2212,1492 L2222,1515 L2212,1509 L2202,1515 Z" fill="#d8d8d8"/><path d="M2268,1501 L2278,1501 L2273,1507Z" fill="#dcdcdc"/><path fill-rule="evenodd" fill="#d8d8d8" d="M2315.93,1500.96 L2315.93,1506.04 L2312.51,1506.43 L2312.09,1507.45 L2314.23,1510.14 L2310.64,1513.73 L2307.95,1511.59 L2306.93,1512.01 L2306.54,1515.43 L2301.46,1515.43 L2301.07,1512.01 L2300.05,1511.59 L2297.36,1513.73 L2293.77,1510.14 L2295.91,1507.45 L2295.49,1506.43 L2292.07,1506.04 L2292.07,1500.96 L2295.49,1500.57 L2295.91,1499.55 L2293.77,1496.86 L2297.36,1493.27 L2300.05,1495.41 L2301.07,1494.99 L2301.46,1491.57 L2306.54,1491.57 L2306.93,1494.99 L2307.95,1495.41 L2310.64,1493.27 L2314.23,1496.86 L2312.09,1499.55 L2312.51,1500.57 Z M2308.5,1503.5 A4.5,4.5 0 1 0 2299.5,1503.5 A4.5,4.5 0 1 0 2308.5,1503.5 Z"/><path d="M2329,1501 L2339,1501 L2334,1507Z" fill="#dcdcdc"/><path d="M2365.5,1492 L2365.5,1516 M2354,1504 L2377,1504" stroke="#dcdcdc" stroke-width="3"/><rect x="2396.5" y="1492.5" width="9" height="9" fill="none" stroke="#dcdcdc" stroke-width="1.3"/><circle cx="2414" cy="1503" r="5.5" fill="none" stroke="#dcdcdc" stroke-width="1.3"/><path d="M2400,1505 L2405,1515 L2395,1515Z" fill="none" stroke="#dcdcdc" stroke-width="1.3"/><path d="M2434,1486 L2461,1486 L2464,1489 L2464,1508 L2434,1508Z" fill="#3a6ab0"/><path d="M2441,1486 L2441,1506 M2434,1494 L2455,1494" stroke="#8ac0f0" stroke-width="1.3"/><circle cx="2441" cy="1494" r="2.5" fill="none" stroke="#fff" stroke-width="1.3"/><rect x="2434" y="1505" width="12" height="8" fill="#f0b020"/><path d="M2447,1512 L2453,1518 L2466,1505" fill="none" stroke="#40b040" stroke-width="3.5"/><rect x="2484.5" y="1495.5" width="24" height="17" fill="none" stroke="#dcdcdc" stroke-width="1.3"/><path d="M2489,1509 L2495,1503 M2504,1499 L2498,1505" stroke="#dcdcdc" stroke-width="1.3"/><path d="M2488,1510 L2488,1505 L2493,1510Z M2505,1498 L2505,1503 L2500,1498Z" fill="#dcdcdc"/><rect x="2520" y="1493" width="24" height="3" fill="#dcdcdc"/><rect x="2520" y="1502" width="24" height="3" fill="#dcdcdc"/><rect x="2520" y="1511" width="24" height="3" fill="#dcdcdc"/></svg>
<svg style="position:absolute;left:0;top:0" width="2556" height="1528"><text x="2239" y="1511.5" font-family="Liberation Sans" font-weight="bold" font-size="17" fill="#ffffff" textLength="18" lengthAdjust="spacingAndGlyphs">1:1</text></svg>
<div style="position:absolute;left:0px;top:0px;width:2556px;height:1px;background:#05a5e8;"></div>
<div style="position:absolute;left:0px;top:0px;width:1px;height:1528px;background:#05a5e8;"></div>
<div style="position:absolute;left:2555px;top:0px;width:1px;height:1528px;background:#05a5e8;"></div>
<div style="position:absolute;left:0px;top:1526px;width:2556px;height:2px;background:#05a5e8;"></div>
</body></html>
